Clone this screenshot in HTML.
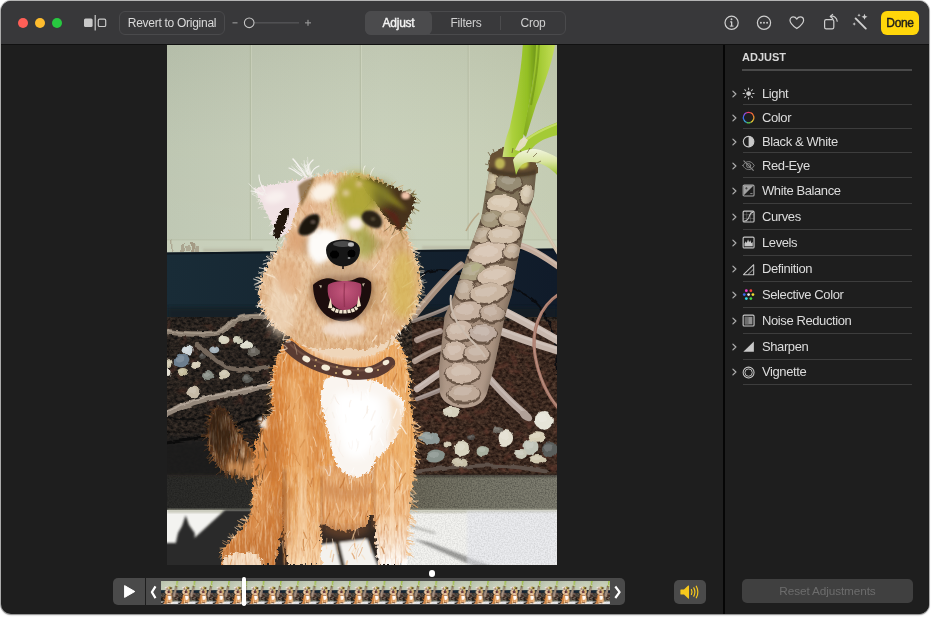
<!DOCTYPE html>
<html lang="en">
<head>
<meta charset="utf-8">
<title>Photos — Adjust</title>
<style>
*{box-sizing:border-box;margin:0;padding:0}
html,body{width:932px;height:618px;background:#fff;overflow:hidden}
body{font-family:"Liberation Sans",Arial,sans-serif;color:#dedede;position:relative}
#win{will-change:transform;position:absolute;left:1px;top:1px;width:928px;height:613px;border-radius:10px;background:#1e1e1e;overflow:hidden;box-shadow:0 0 0 1px rgba(120,120,120,.55),0 1px 2px rgba(0,0,0,.35)}
#tb{position:absolute;left:0;top:0;width:928px;height:44px;background:#38383a;border-bottom:1px solid #111}
.abs{position:absolute}
.dot{position:absolute;top:16.8px;width:10.4px;height:10.4px;border-radius:50%}
.btn{position:absolute;border-radius:6px;font-size:12.5px;line-height:1;white-space:nowrap}
#seg{position:absolute;left:364px;top:10px;width:201px;height:24px;border-radius:6px;border:1px solid #4a4a4c;background:#39393b}
#seg .s{position:absolute;top:0;height:22px;line-height:22px;text-align:center;font-size:12px;letter-spacing:-0.25px;color:#d0d0d0}
#panel{position:absolute;left:724px;top:44px;width:204px;height:570px;background:#1e1e1e}
#vsep{position:absolute;left:722px;top:44px;width:2px;height:570px;background:#060606}
.row{position:absolute;left:0;width:204px;height:20px}
.row .t{position:absolute;left:37px;top:0;font-size:13px;line-height:20px;color:#dcdcdc;white-space:nowrap;letter-spacing:-0.4px}
.row svg.chev{position:absolute;left:6px;top:5px}
.row svg.ic{position:absolute;left:17.2px;top:3.4px;width:13.2px;height:13.2px}
.hl{position:absolute;left:17.8px;width:169px;height:1px;background:#3d3d3d}
</style>
</head>
<body>
<div id="win">
  <div id="tb">
    <div class="dot" style="left:16.9px;background:#ff5f57"></div>
    <div class="dot" style="left:33.9px;background:#febc2e"></div>
    <div class="dot" style="left:50.9px;background:#28c840"></div>
    
    <svg class="abs" style="left:82px;top:13px" width="26" height="18" viewBox="0 0 26 18">
      <rect x="1" y="4.5" width="8.6" height="8.6" rx="1.5" fill="#c9c9c9"/>
      <rect x="11.6" y="1" width="1.2" height="15.5" fill="#c9c9c9"/>
      <rect x="15.3" y="5.1" width="7.4" height="7.4" rx="1.3" fill="none" stroke="#c9c9c9" stroke-width="1.2"/>
    </svg>
    <div class="btn" style="left:118px;top:10px;width:106px;height:24px;border:1px solid #4a4a4c;background:#39393b;color:#dadada;text-align:center;line-height:22px;font-size:12px;letter-spacing:-0.28px">Revert to Original</div>
    <svg class="abs" style="left:228px;top:12px" width="90" height="20" viewBox="0 0 90 20">
      <rect x="3.5" y="9.3" width="5" height="1.1" fill="#9a9a9a"/>
      <rect x="25" y="9.3" width="45" height="1.1" fill="#5c5c5e"/>
      <circle cx="20.2" cy="9.8" r="4.8" fill="#38383a" stroke="#c4c4c4" stroke-width="1.1"/>
      <rect x="76" y="9.3" width="6" height="1.1" fill="#9a9a9a"/><rect x="78.45" y="6.8" width="1.1" height="6" fill="#9a9a9a"/>
    </svg>
    <div id="seg">
      <div class="s" style="left:-1px;top:-1px;width:67px;height:24px;line-height:24px;background:#4b4b4d;border-radius:6px;color:#f4f4f4;font-size:12px;letter-spacing:-0.25px;-webkit-text-stroke:0.4px #f4f4f4">Adjust</div>
      <div class="s" style="left:66px;width:68px">Filters</div>
      <div class="abs" style="left:133.5px;top:4px;width:1px;height:14px;background:#4c4c4e"></div>
      <div class="s" style="left:134px;width:66px">Crop</div>
    </div>
    <svg class="abs" style="left:720px;top:11.2px" width="152" height="22" viewBox="0 0 152 22">
      <g fill="none" stroke="#cfcfcf" stroke-width="1.2" stroke-linecap="round" stroke-linejoin="round">
        <circle cx="10.6" cy="10.8" r="6.6"/>
        <circle cx="43" cy="10.8" r="6.6"/>
        <path d="M75.8 16.6 C 72 13.8 69 11.3 69 8.4 C 69 6.3 70.5 4.9 72.3 4.9 C 73.8 4.9 75 5.8 75.8 7.1 C 76.6 5.8 77.8 4.9 79.3 4.9 C 81.1 4.9 82.6 6.3 82.6 8.4 C 82.6 11.3 79.6 13.8 75.8 16.6 Z"/>
        <rect x="103.6" y="7.6" width="9.2" height="9.2" rx="1.6"/>
        <path d="M109.5 4.4 C 113 3.6 115.9 5.6 116.2 9.2"/>
        <path d="M111.6 2.4 L109.3 4.5 L111.7 6.5"/>
        <path d="M134.6 6.4 L144.8 16.6" stroke-width="1.9"/>
      </g>
      <g fill="#cfcfcf">
        <rect x="10" y="9.6" width="1.3" height="4.6"/><rect x="9" y="9.4" width="2" height="1"/><rect x="8.8" y="13.6" width="3.7" height="1"/><circle cx="10.5" cy="7.2" r="0.95"/>
        <circle cx="39.9" cy="10.8" r="0.95"/><circle cx="43" cy="10.8" r="0.95"/><circle cx="46.1" cy="10.8" r="0.95"/>
        <path d="M143.5 1.8 l0.9 2.1 2.1 0.9 -2.1 0.9 -0.9 2.1 -0.9 -2.1 -2.1 -0.9 2.1 -0.9z"/>
        <path d="M138 1.6 l0.5 1.1 1.1 0.5 -1.1 0.5 -0.5 1.1 -0.5 -1.1 -1.1 -0.5 1.1 -0.5z"/>
        <path d="M133.2 10.2 l0.55 1.2 1.2 0.55 -1.2 0.55 -0.55 1.2 -0.55 -1.2 -1.2 -0.55 1.2 -0.55z"/>
      </g>
    </svg>
    <div class="btn" style="left:880px;top:10px;width:38px;height:24px;background:#ffd60a;color:#1c1c1c;text-align:center;line-height:24px;font-size:12px;letter-spacing:-0.35px;-webkit-text-stroke:0.4px #1c1c1c">Done</div>

  </div>
  
  <svg id="photo" class="abs" style="left:166px;top:44px" width="390" height="520" viewBox="0 0 390 520">
    <defs>
      <filter id="b05" x="-20%" y="-20%" width="140%" height="140%"><feGaussianBlur stdDeviation="0.5"/></filter>
      <filter id="b1" x="-20%" y="-20%" width="140%" height="140%"><feGaussianBlur stdDeviation="1"/></filter>
      <filter id="b2" x="-20%" y="-20%" width="140%" height="140%"><feGaussianBlur stdDeviation="2"/></filter>
      <filter id="b4" x="-30%" y="-30%" width="160%" height="160%"><feGaussianBlur stdDeviation="4"/></filter>
      <filter id="b8" x="-40%" y="-40%" width="180%" height="180%"><feGaussianBlur stdDeviation="8"/></filter>
      <filter id="fur" x="-20%" y="-20%" width="140%" height="140%" color-interpolation-filters="sRGB">
        <feTurbulence type="fractalNoise" baseFrequency="0.3" numOctaves="2" seed="4" result="n"/>
        <feDisplacementMap in="SourceGraphic" in2="n" scale="8" xChannelSelector="R" yChannelSelector="G" result="disp"/>
        <feTurbulence type="fractalNoise" baseFrequency="0.5 0.07" numOctaves="3" seed="12" result="n2"/>
        <feColorMatrix in="n2" type="matrix" values="0 0 0 0 1  0 0 0 0 0.93  0 0 0 0 0.82  1.15 0 0 0 -0.5" result="lt"/>
        <feComposite in="lt" in2="disp" operator="in" result="ltin"/>
        <feColorMatrix in="n2" type="matrix" values="0 0 0 0 0.76  0 0 0 0 0.38  0 0 0 0 0.1  0 0.95 0 0 -0.42" result="dk"/>
        <feComposite in="dk" in2="disp" operator="in" result="dkin"/>
        <feMerge><feMergeNode in="disp"/><feMergeNode in="dkin"/><feMergeNode in="ltin"/></feMerge>
        <feGaussianBlur stdDeviation="0.55"/>
      </filter>
      <filter id="furh" x="-20%" y="-20%" width="140%" height="140%" color-interpolation-filters="sRGB">
        <feTurbulence type="fractalNoise" baseFrequency="0.3" numOctaves="2" seed="4" result="n"/>
        <feDisplacementMap in="SourceGraphic" in2="n" scale="8" xChannelSelector="R" yChannelSelector="G" result="disp"/>
        <feTurbulence type="fractalNoise" baseFrequency="0.3 0.12" numOctaves="3" seed="21" result="n2"/>
        <feColorMatrix in="n2" type="matrix" values="0 0 0 0 1  0 0 0 0 0.93  0 0 0 0 0.82  0.9 0 0 0 -0.4" result="lt"/>
        <feComposite in="lt" in2="disp" operator="in" result="ltin"/>
        <feColorMatrix in="n2" type="matrix" values="0 0 0 0 0.66  0 0 0 0 0.34  0 0 0 0 0.1  0 0.7 0 0 -0.32" result="dk"/>
        <feComposite in="dk" in2="disp" operator="in" result="dkin"/>
        <feMerge><feMergeNode in="disp"/><feMergeNode in="dkin"/><feMergeNode in="ltin"/></feMerge>
        <feGaussianBlur stdDeviation="0.55"/>
      </filter>
      <filter id="fur2" x="-20%" y="-20%" width="140%" height="140%">
        <feTurbulence type="fractalNoise" baseFrequency="0.35" numOctaves="2" seed="9" result="n"/>
        <feDisplacementMap in="SourceGraphic" in2="n" scale="6" xChannelSelector="R" yChannelSelector="G"/>
        <feGaussianBlur stdDeviation="0.5"/>
      </filter>
      <filter id="mulch" x="0" y="0" width="100%" height="100%" color-interpolation-filters="sRGB">
        <feTurbulence type="fractalNoise" baseFrequency="0.28 0.36" numOctaves="3" seed="7"/>
        <feColorMatrix type="matrix" values="0.5 0 0 0 -0.07  0.4 0 0 0 -0.05  0.32 0 0 0 -0.035  0 0 0 0 1"/>
      </filter>
      <filter id="rough" x="-5%" y="-5%" width="110%" height="110%" color-interpolation-filters="sRGB">
        <feTurbulence type="fractalNoise" baseFrequency="0.12" numOctaves="2" seed="5" result="n"/>
        <feDisplacementMap in="SourceGraphic" in2="n" scale="4.5" xChannelSelector="R" yChannelSelector="G"/>
        <feGaussianBlur stdDeviation="0.55"/>
      </filter>
      <filter id="grain" x="0" y="0" width="100%" height="100%" color-interpolation-filters="sRGB">
        <feTurbulence type="fractalNoise" baseFrequency="0.7" numOctaves="2" seed="3"/>
        <feColorMatrix type="matrix" values="0 0 0 0 0  0 0 0 0 0  0 0 0 0 0  1.6 0 0 0 -0.55"/>
      </filter>
      <linearGradient id="wall" x1="0" x2="1" y1="0" y2="0">
        <stop offset="0" stop-color="#bcc5b0"/><stop offset="0.22" stop-color="#c2cab5"/><stop offset="0.55" stop-color="#c8d0ba"/><stop offset="0.8" stop-color="#c6ceb6"/><stop offset="1" stop-color="#c2cab0"/>
      </linearGradient>
      <linearGradient id="wallv" x1="0" x2="0" y1="0" y2="1">
        <stop offset="0" stop-color="#000" stop-opacity="0.04"/><stop offset="0.5" stop-color="#fff" stop-opacity="0.03"/><stop offset="1" stop-color="#fff" stop-opacity="0.06"/>
      </linearGradient>
      <linearGradient id="curb" x1="0" x2="1" y1="0" y2="0">
        <stop offset="0" stop-color="#2c2c2a"/><stop offset="0.24" stop-color="#30302d"/><stop offset="0.3" stop-color="#5a584c"/><stop offset="0.62" stop-color="#6e6b5c"/><stop offset="0.8" stop-color="#79786a"/><stop offset="1" stop-color="#807f72"/>
      </linearGradient>
      <clipPath id="pc"><rect x="0" y="0" width="390" height="520"/></clipPath>
    </defs>
    <g id="photoG" clip-path="url(#pc)">
      <!-- wall -->
      <rect x="0" y="0" width="390" height="209" fill="url(#wall)"/>
      <rect x="0" y="0" width="390" height="209" fill="url(#wallv)"/>
      <g filter="url(#b05)">
        <rect x="82.8" y="0" width="1.1" height="196" fill="#a9b096" opacity=".55"/><rect x="84" y="0" width="1" height="196" fill="#d8dcc6" opacity=".4"/>
        <rect x="192.8" y="0" width="1.1" height="130" fill="#adb49a" opacity=".6"/><rect x="194" y="0" width="1" height="130" fill="#dadec8" opacity=".45"/>
        <rect x="300.6" y="0" width="1.1" height="196" fill="#adb49a" opacity=".6"/><rect x="301.8" y="0" width="1" height="196" fill="#d8dcc6" opacity=".4"/>
      </g>
      <!-- wall base trim -->
      <rect x="0" y="195" width="390" height="13.5" fill="#cad1bc" opacity=".7"/>
      <rect x="0" y="194.4" width="390" height="1" fill="#b0b69c" opacity=".55"/>
      <g filter="url(#rough)" fill="#86705a">
        <rect x="4" y="194" width="1.4" height="12" opacity=".4"/><rect x="14" y="199" width="3" height="8" opacity=".45"/><rect x="18" y="201" width="5" height="6" opacity=".4"/><rect x="24" y="197" width="3.4" height="10" opacity=".55"/><rect x="28" y="200" width="4" height="7" opacity=".45"/>
        <rect x="110" y="198" width="1.2" height="9" opacity=".3"/>
      </g>
      <g fill="#86705a" filter="url(#b1)"><rect x="36" y="203.5" width="60" height="3.5" opacity=".2"/><rect x="255" y="201" width="60" height="3.5" opacity=".2"/></g>
      <!-- dark band -->
      <defs><linearGradient id="bandg" x1="0" x2="1" y1="0" y2="0"><stop offset="0" stop-color="#192c37"/><stop offset="0.5" stop-color="#152430"/><stop offset="1" stop-color="#101b2a"/></linearGradient></defs>
      <path d="M0 207.6 L390 203.6 L390 275 L0 275 Z" fill="url(#bandg)"/>
      <path d="M0 207.6 L390 203.6 L390 205.6 L0 209.6 Z" fill="#0c141c" opacity=".8"/>
      <rect x="0" y="262" width="390" height="14" fill="#121c22" opacity=".7" filter="url(#b2)"/>
      <!-- mulch ground -->
      <rect x="0" y="272" width="390" height="160" fill="#2a2522"/>
      <rect x="0" y="272" width="390" height="160" filter="url(#mulch)" opacity=".95"/>
      <rect x="0" y="272" width="110" height="160" fill="#1c1a19" opacity=".35"/>
      <rect x="245" y="276" width="150" height="156" fill="#6a3420" opacity=".22"/>
      <rect x="-10" y="392" width="116" height="44" fill="#1e1e1d" opacity=".92" filter="url(#b4)"/>
      <g filter="url(#rough)"><g fill="#6a3d31" opacity=".55" filter="url(#b1)"><ellipse cx="339" cy="391" rx="7.0" ry="2.5" transform="rotate(34 339 391)"/><ellipse cx="380" cy="289" rx="5.3" ry="2.5" transform="rotate(21 380 289)"/><ellipse cx="377" cy="301" rx="5.3" ry="1.4" transform="rotate(6 377 301)"/><ellipse cx="332" cy="287" rx="4.1" ry="1.4" transform="rotate(58 332 287)"/><ellipse cx="358" cy="308" rx="7.0" ry="1.2" transform="rotate(16 358 308)"/><ellipse cx="272" cy="285" rx="7.4" ry="1.3" transform="rotate(-40 272 285)"/><ellipse cx="388" cy="410" rx="4.4" ry="2.5" transform="rotate(5 388 410)"/><ellipse cx="347" cy="314" rx="7.7" ry="2.1" transform="rotate(65 347 314)"/><ellipse cx="376" cy="328" rx="4.8" ry="1.3" transform="rotate(-50 376 328)"/><ellipse cx="264" cy="328" rx="6.0" ry="1.0" transform="rotate(25 264 328)"/><ellipse cx="301" cy="329" rx="7.1" ry="1.8" transform="rotate(-26 301 329)"/><ellipse cx="320" cy="386" rx="3.3" ry="2.6" transform="rotate(-67 320 386)"/><ellipse cx="356" cy="406" rx="3.1" ry="2.3" transform="rotate(-19 356 406)"/><ellipse cx="333" cy="286" rx="3.2" ry="1.3" transform="rotate(64 333 286)"/><ellipse cx="282" cy="393" rx="7.6" ry="2.5" transform="rotate(-22 282 393)"/><ellipse cx="303" cy="360" rx="6.9" ry="1.2" transform="rotate(35 303 360)"/><ellipse cx="363" cy="408" rx="3.2" ry="2.5" transform="rotate(-57 363 408)"/><ellipse cx="301" cy="372" rx="7.6" ry="1.5" transform="rotate(59 301 372)"/><ellipse cx="329" cy="330" rx="4.6" ry="1.3" transform="rotate(-59 329 330)"/><ellipse cx="275" cy="384" rx="8.0" ry="1.3" transform="rotate(-63 275 384)"/><ellipse cx="388" cy="361" rx="5.0" ry="1.4" transform="rotate(13 388 361)"/><ellipse cx="367" cy="350" rx="5.1" ry="1.1" transform="rotate(58 367 350)"/><ellipse cx="259" cy="356" rx="7.2" ry="1.2" transform="rotate(32 259 356)"/><ellipse cx="383" cy="375" rx="6.9" ry="1.2" transform="rotate(-9 383 375)"/><ellipse cx="275" cy="406" rx="4.5" ry="1.7" transform="rotate(70 275 406)"/><ellipse cx="370" cy="425" rx="5.3" ry="1.8" transform="rotate(32 370 425)"/><ellipse cx="320" cy="327" rx="5.0" ry="1.2" transform="rotate(-17 320 327)"/><ellipse cx="388" cy="422" rx="6.1" ry="1.8" transform="rotate(-23 388 422)"/><ellipse cx="267" cy="324" rx="6.9" ry="2.4" transform="rotate(-19 267 324)"/><ellipse cx="361" cy="396" rx="6.5" ry="2.1" transform="rotate(36 361 396)"/><ellipse cx="304" cy="386" rx="4.4" ry="1.8" transform="rotate(38 304 386)"/><ellipse cx="348" cy="327" rx="7.7" ry="2.0" transform="rotate(11 348 327)"/><ellipse cx="257" cy="363" rx="4.3" ry="2.1" transform="rotate(-5 257 363)"/><ellipse cx="365" cy="378" rx="7.0" ry="1.6" transform="rotate(20 365 378)"/><ellipse cx="355" cy="403" rx="4.8" ry="2.3" transform="rotate(52 355 403)"/><ellipse cx="348" cy="425" rx="7.8" ry="1.8" transform="rotate(4 348 425)"/><ellipse cx="277" cy="405" rx="7.7" ry="1.8" transform="rotate(27 277 405)"/><ellipse cx="352" cy="389" rx="3.9" ry="2.2" transform="rotate(11 352 389)"/><ellipse cx="345" cy="345" rx="6.1" ry="2.2" transform="rotate(19 345 345)"/><ellipse cx="352" cy="289" rx="3.8" ry="1.7" transform="rotate(21 352 289)"/><ellipse cx="285" cy="383" rx="6.2" ry="1.1" transform="rotate(-4 285 383)"/><ellipse cx="286" cy="293" rx="3.7" ry="1.5" transform="rotate(-45 286 293)"/><ellipse cx="281" cy="290" rx="5.3" ry="1.6" transform="rotate(16 281 290)"/><ellipse cx="335" cy="319" rx="7.5" ry="1.0" transform="rotate(-13 335 319)"/><ellipse cx="293" cy="344" rx="3.6" ry="2.3" transform="rotate(-18 293 344)"/><ellipse cx="260" cy="373" rx="3.5" ry="1.9" transform="rotate(-22 260 373)"/><ellipse cx="333" cy="422" rx="7.1" ry="1.7" transform="rotate(44 333 422)"/><ellipse cx="342" cy="338" rx="3.7" ry="2.0" transform="rotate(9 342 338)"/><ellipse cx="384" cy="423" rx="6.0" ry="1.6" transform="rotate(55 384 423)"/><ellipse cx="255" cy="300" rx="5.8" ry="2.0" transform="rotate(-50 255 300)"/><ellipse cx="340" cy="412" rx="4.9" ry="1.7" transform="rotate(-38 340 412)"/><ellipse cx="294" cy="424" rx="4.9" ry="2.5" transform="rotate(58 294 424)"/><ellipse cx="335" cy="322" rx="7.9" ry="1.8" transform="rotate(-12 335 322)"/><ellipse cx="298" cy="426" rx="5.5" ry="1.5" transform="rotate(-3 298 426)"/><ellipse cx="271" cy="374" rx="5.2" ry="1.5" transform="rotate(39 271 374)"/><ellipse cx="367" cy="287" rx="5.7" ry="1.4" transform="rotate(61 367 287)"/><ellipse cx="361" cy="320" rx="4.3" ry="1.2" transform="rotate(68 361 320)"/><ellipse cx="295" cy="372" rx="5.4" ry="2.0" transform="rotate(15 295 372)"/><ellipse cx="355" cy="302" rx="6.8" ry="1.5" transform="rotate(5 355 302)"/><ellipse cx="300" cy="327" rx="5.6" ry="1.7" transform="rotate(-19 300 327)"/><ellipse cx="356" cy="369" rx="3.2" ry="1.4" transform="rotate(-6 356 369)"/><ellipse cx="379" cy="412" rx="5.7" ry="1.0" transform="rotate(39 379 412)"/><ellipse cx="313" cy="367" rx="6.5" ry="2.0" transform="rotate(-3 313 367)"/><ellipse cx="378" cy="340" rx="5.0" ry="2.4" transform="rotate(-42 378 340)"/><ellipse cx="295" cy="404" rx="3.3" ry="2.3" transform="rotate(27 295 404)"/><ellipse cx="313" cy="326" rx="6.9" ry="2.5" transform="rotate(-50 313 326)"/><ellipse cx="320" cy="364" rx="5.5" ry="1.5" transform="rotate(-49 320 364)"/><ellipse cx="334" cy="401" rx="3.3" ry="1.4" transform="rotate(45 334 401)"/><ellipse cx="362" cy="380" rx="3.1" ry="2.2" transform="rotate(67 362 380)"/><ellipse cx="390" cy="385" rx="3.2" ry="2.3" transform="rotate(-39 390 385)"/><ellipse cx="71" cy="356" rx="5.8" ry="1.2" opacity=".7" transform="rotate(-29 71 356)"/><ellipse cx="101" cy="289" rx="5.4" ry="1.5" opacity=".7" transform="rotate(-47 101 289)"/><ellipse cx="68" cy="280" rx="3.4" ry="1.5" opacity=".7" transform="rotate(-60 68 280)"/><ellipse cx="6" cy="324" rx="6.0" ry="2.1" opacity=".7" transform="rotate(-51 6 324)"/><ellipse cx="47" cy="302" rx="5.4" ry="1.6" opacity=".7" transform="rotate(61 47 302)"/><ellipse cx="41" cy="281" rx="5.8" ry="1.2" opacity=".7" transform="rotate(18 41 281)"/><ellipse cx="56" cy="352" rx="5.2" ry="1.7" opacity=".7" transform="rotate(-33 56 352)"/><ellipse cx="61" cy="297" rx="6.0" ry="1.6" opacity=".7" transform="rotate(-51 61 297)"/><ellipse cx="26" cy="307" rx="5.9" ry="1.2" opacity=".7" transform="rotate(30 26 307)"/><ellipse cx="72" cy="283" rx="5.7" ry="1.1" opacity=".7" transform="rotate(-53 72 283)"/><ellipse cx="65" cy="296" rx="6.5" ry="1.6" opacity=".7" transform="rotate(-25 65 296)"/><ellipse cx="88" cy="278" rx="5.9" ry="1.1" opacity=".7" transform="rotate(-49 88 278)"/><ellipse cx="105" cy="333" rx="3.9" ry="1.1" opacity=".7" transform="rotate(66 105 333)"/><ellipse cx="73" cy="345" rx="3.6" ry="1.7" opacity=".7" transform="rotate(-20 73 345)"/><ellipse cx="26" cy="304" rx="5.5" ry="1.4" opacity=".7" transform="rotate(-16 26 304)"/><ellipse cx="15" cy="346" rx="5.6" ry="2.0" opacity=".7" transform="rotate(-9 15 346)"/><ellipse cx="94" cy="319" rx="5.4" ry="1.7" opacity=".7" transform="rotate(34 94 319)"/><ellipse cx="44" cy="284" rx="3.1" ry="1.2" opacity=".7" transform="rotate(-64 44 284)"/><ellipse cx="98" cy="316" rx="6.0" ry="1.0" opacity=".7" transform="rotate(-4 98 316)"/><ellipse cx="98" cy="328" rx="4.7" ry="1.6" opacity=".7" transform="rotate(-56 98 328)"/><ellipse cx="17" cy="289" rx="4.5" ry="1.5" opacity=".7" transform="rotate(53 17 289)"/><ellipse cx="17" cy="297" rx="4.1" ry="1.2" opacity=".7" transform="rotate(-30 17 297)"/><ellipse cx="26" cy="316" rx="3.1" ry="2.1" opacity=".7" transform="rotate(-18 26 316)"/><ellipse cx="103" cy="334" rx="5.7" ry="1.6" opacity=".7" transform="rotate(62 103 334)"/><ellipse cx="13" cy="332" rx="4.2" ry="1.8" opacity=".7" transform="rotate(32 13 332)"/><ellipse cx="18" cy="293" rx="3.1" ry="1.3" opacity=".7" transform="rotate(-59 18 293)"/><ellipse cx="44" cy="358" rx="4.5" ry="1.4" opacity=".7" transform="rotate(-4 44 358)"/><ellipse cx="31" cy="338" rx="5.9" ry="1.2" opacity=".7" transform="rotate(-36 31 338)"/><ellipse cx="74" cy="355" rx="5.6" ry="1.5" opacity=".7" transform="rotate(67 74 355)"/><ellipse cx="1" cy="281" rx="6.1" ry="1.5" opacity=".7" transform="rotate(-64 1 281)"/></g><path d="M0 398 C 20 396 40 392 60 384 S 90 372 104 366" stroke="#0b0b0b" stroke-width="3" fill="none"/><path d="M0 372 C 20 378 45 372 62 364" stroke="#0d0d0d" stroke-width="2.2" fill="none" opacity=".8"/><path d="M246 236 C 262 222 280 222 300 232 S 352 236 372 262 S 388 300 390 330" stroke="#0a0c10" stroke-width="1.8" fill="none"/><path d="M0 286.5 C 18 289 36 290 48.5 288 S 64 276 72 273.5 S 88 271 100 271" stroke="#8b7e70" stroke-width="5.5" fill="none" stroke-linecap="round"/><path d="M0 285.5 C 18 288 36 289 48.5 287 S 64 275 72 272.5 S 88 270 100 270" stroke="#b0a494" stroke-width="1.6" fill="none" opacity=".7"/><path d="M30 300 C 40 306 46 314 56 320 S 80 326 100 322" stroke="#74675b" stroke-width="4.5" fill="none" stroke-linecap="round"/><path d="M0 368 C 14 361 26 357 38 354 S 60 350 74 346.5 S 92 342 102 341" stroke="#94877a" stroke-width="6" fill="none" stroke-linecap="round"/><path d="M0 366.5 C 14 359.5 26 355.5 38 352.5 S 60 348.5 74 345 S 92 340.5 102 339.5" stroke="#c0b4a6" stroke-width="1.8" fill="none" opacity=".7"/><path d="M251 426.5 C 272 423 292 421 314 420.5 S 356 422 379 426.5" stroke="#5e5149" stroke-width="4" fill="none" stroke-linecap="round"/><ellipse cx="57" cy="295" rx="5.5" ry="4" fill="#d6d2be"/><ellipse cx="56.2" cy="294.0" rx="3.0" ry="1.8" fill="#fff" opacity=".14"/><ellipse cx="70.5" cy="295" rx="4.5" ry="4" fill="#c9c8b4"/><ellipse cx="69.8" cy="294.0" rx="2.5" ry="1.8" fill="#fff" opacity=".14"/><ellipse cx="80" cy="300" rx="7" ry="4.5" fill="#dcdccc" transform="rotate(-10 80 300)"/><ellipse cx="79.0" cy="298.9" rx="3.9" ry="2.0" fill="#fff" opacity=".14" transform="rotate(-10 80 300)"/><ellipse cx="20.6" cy="304.8" rx="6" ry="5" fill="#cfd7da"/><ellipse cx="19.7" cy="303.6" rx="3.3" ry="2.2" fill="#fff" opacity=".14"/><ellipse cx="47.3" cy="304.8" rx="5" ry="3.5" fill="#a4b0b8"/><ellipse cx="46.5" cy="303.9" rx="2.8" ry="1.6" fill="#fff" opacity=".14"/><ellipse cx="14.6" cy="315.7" rx="8" ry="6.5" fill="#6c7e8e" transform="rotate(-15 14.6 315.7)"/><ellipse cx="13.4" cy="314.1" rx="4.4" ry="2.9" fill="#fff" opacity=".14" transform="rotate(-15 14.6 315.7)"/><ellipse cx="29" cy="320" rx="5.5" ry="4" fill="#d6cdb6"/><ellipse cx="28.2" cy="319.0" rx="3.0" ry="1.8" fill="#fff" opacity=".14"/><ellipse cx="2.4" cy="318" rx="3" ry="4" fill="#d2cab2"/><ellipse cx="1.9" cy="317.0" rx="1.7" ry="1.8" fill="#fff" opacity=".14"/><ellipse cx="1" cy="327" rx="2.5" ry="4" fill="#e4e0d4"/><ellipse cx="0.6" cy="326.0" rx="1.4" ry="1.8" fill="#fff" opacity=".14"/><ellipse cx="15.8" cy="327" rx="5.5" ry="4" fill="#c6be9e"/><ellipse cx="15.0" cy="326.0" rx="3.0" ry="1.8" fill="#fff" opacity=".14"/><ellipse cx="41" cy="330" rx="6" ry="5" fill="#868c84"/><ellipse cx="40.1" cy="328.8" rx="3.3" ry="2.2" fill="#fff" opacity=".14"/><ellipse cx="57" cy="329" rx="5" ry="4.5" fill="#cec6ae"/><ellipse cx="56.2" cy="327.9" rx="2.8" ry="2.0" fill="#fff" opacity=".14"/><ellipse cx="26.7" cy="347" rx="6.5" ry="5.5" fill="#c6baa6"/><ellipse cx="25.7" cy="345.6" rx="3.6" ry="2.5" fill="#fff" opacity=".14"/><ellipse cx="87" cy="307" rx="6" ry="5" fill="#68645c"/><ellipse cx="86.1" cy="305.8" rx="3.3" ry="2.2" fill="#fff" opacity=".14"/><ellipse cx="80" cy="334" rx="5" ry="4" fill="#585853"/><ellipse cx="79.2" cy="333.0" rx="2.8" ry="1.8" fill="#fff" opacity=".14"/><ellipse cx="36" cy="312" rx="4" ry="3" fill="#4c4a46"/><ellipse cx="35.4" cy="311.2" rx="2.2" ry="1.4" fill="#fff" opacity=".14"/><ellipse cx="261.5" cy="393" rx="10.5" ry="6" fill="#8f9a98" transform="rotate(8 261.5 393)"/><ellipse cx="259.9" cy="391.5" rx="5.8" ry="2.7" fill="#fff" opacity=".14" transform="rotate(8 261.5 393)"/><ellipse cx="294.8" cy="404" rx="8.2" ry="8" fill="#d8d4c0"/><ellipse cx="293.6" cy="402.0" rx="4.5" ry="3.6" fill="#fff" opacity=".14"/><ellipse cx="268.5" cy="411" rx="9.5" ry="6.5" fill="#88928c" transform="rotate(-8 268.5 411)"/><ellipse cx="267.1" cy="409.4" rx="5.2" ry="2.9" fill="#fff" opacity=".14" transform="rotate(-8 268.5 411)"/><ellipse cx="338.3" cy="393" rx="7.8" ry="8" fill="#e2decf"/><ellipse cx="337.1" cy="391.0" rx="4.3" ry="3.6" fill="#fff" opacity=".14"/><ellipse cx="315.8" cy="406" rx="6.2" ry="5" fill="#a8b0a0"/><ellipse cx="314.9" cy="404.8" rx="3.4" ry="2.2" fill="#fff" opacity=".14"/><ellipse cx="363.5" cy="402" rx="8" ry="8" fill="#c0c4b8"/><ellipse cx="362.3" cy="400.0" rx="4.4" ry="3.6" fill="#fff" opacity=".14"/><ellipse cx="369.7" cy="392" rx="9" ry="4.8" fill="#d8d0b8"/><ellipse cx="368.3" cy="390.8" rx="5.0" ry="2.2" fill="#fff" opacity=".14"/><ellipse cx="383" cy="404.5" rx="8" ry="7.5" fill="#5a5e5c"/><ellipse cx="381.8" cy="402.6" rx="4.4" ry="3.4" fill="#fff" opacity=".14"/><ellipse cx="353.5" cy="409" rx="6.5" ry="5" fill="#c8c8b8"/><ellipse cx="352.5" cy="407.8" rx="3.6" ry="2.2" fill="#fff" opacity=".14"/><ellipse cx="292.7" cy="417.6" rx="8.2" ry="4.2" fill="#c8c0a8"/><ellipse cx="291.5" cy="416.6" rx="4.5" ry="1.9" fill="#fff" opacity=".14"/><ellipse cx="370.8" cy="414.2" rx="7.8" ry="4.2" fill="#d0c8b0"/><ellipse cx="369.6" cy="413.1" rx="4.3" ry="1.9" fill="#fff" opacity=".14"/><ellipse cx="281" cy="399.6" rx="3.5" ry="3" fill="#cfc7b1"/><ellipse cx="280.5" cy="398.9" rx="1.9" ry="1.4" fill="#fff" opacity=".14"/><ellipse cx="285.4" cy="366.5" rx="7" ry="4.8" fill="#d6d0bc"/><ellipse cx="284.3" cy="365.3" rx="3.9" ry="2.2" fill="#fff" opacity=".14"/><ellipse cx="376.9" cy="375.4" rx="9" ry="9.5" fill="#e6e4d8"/><ellipse cx="375.5" cy="373.0" rx="5.0" ry="4.3" fill="#fff" opacity=".14"/><ellipse cx="283" cy="367" rx="7" ry="5" fill="#d6d0bc"/><ellipse cx="281.9" cy="365.8" rx="3.9" ry="2.2" fill="#fff" opacity=".14"/><ellipse cx="331" cy="385" rx="4" ry="3" fill="#6e6a62"/><ellipse cx="330.4" cy="384.2" rx="2.2" ry="1.4" fill="#fff" opacity=".14"/><ellipse cx="304" cy="392" rx="4" ry="3" fill="#4e4a46"/><ellipse cx="303.4" cy="391.2" rx="2.2" ry="1.4" fill="#fff" opacity=".14"/></g>
      <!-- curb -->
      <rect x="0" y="430" width="390" height="37" fill="url(#curb)"/>
      <rect x="0" y="430" width="390" height="37" filter="url(#grain)" opacity=".35"/>
      <rect x="0" y="429" width="390" height="3" fill="#2a2824" opacity=".6" filter="url(#b1)"/>
      <!-- pavement -->
      <rect x="0" y="465" width="390" height="55" fill="#f3f3f0"/>
      <rect x="0" y="464" width="390" height="4" fill="#b9baa8" opacity=".7" filter="url(#b1)"/>
      <g filter="url(#b1)">
        <path d="M58 465 L104 465 L104 530 L-10 530 L-10 498 L22 498 Z" fill="#2b2b29"/>
        <path d="M8.8 498 L11 488 L15 481 L18.7 470.5 L22 480 L27.7 488 L27.7 498 Z" fill="#2b2b29"/>
        <path d="M92 464 L226 464 L234 530 L80 530 Z" fill="#2e2622"/>
        <path d="M152 500 L200 494 L214 530 L150 530 Z" fill="#f4f2ee"/>
        <path d="M170 497 L178 530" stroke="#3a3028" stroke-width="4.5"/>
        <path d="M245.6 494 L262 497 L348 530 L326 530 Z" fill="#8e8e8c" opacity=".85"/>
        <path d="M243 481 L268 488" stroke="#a0a09c" stroke-width="2.5" opacity=".6"/>
        <rect x="300" y="466" width="90" height="54" fill="#e6e8ee" opacity=".6"/>
      </g>
      <rect x="240" y="466" width="150" height="54" filter="url(#grain)" opacity=".12"/>
      <!--TRUNK-START--><defs><clipPath id="tc"><path d="M324.7 112 L368.7 112 L369 128 L367 150 L359.6 172.6 L351.6 211 L344.5 250 L338 271 L327 322.6 L320 348 Q 316 362 296 363 Q 276 361 273 348 L272 322.6 L277.6 271 L287 250 L300 211 L314.4 172.6 L318 150 L322 128 Z"/></clipPath><linearGradient id="tg" x1="0" x2="0" y1="0" y2="1"><stop offset="0" stop-color="#6a5e46"/><stop offset="0.15" stop-color="#7e7058"/><stop offset="0.45" stop-color="#917c68"/><stop offset="0.7" stop-color="#a8917f"/><stop offset="1" stop-color="#b29c8c"/></linearGradient>
<linearGradient id="st1" x1="0" x2="1" y1="0" y2="0"><stop offset="0" stop-color="#cbdf7c"/><stop offset="0.3" stop-color="#acd03c"/><stop offset="0.75" stop-color="#93bf24"/><stop offset="1" stop-color="#6f9618"/></linearGradient>
<linearGradient id="st2" x1="0" x2="1" y1="0" y2="0"><stop offset="0" stop-color="#7fa61e"/><stop offset="0.5" stop-color="#a0c830"/><stop offset="1" stop-color="#c4de58"/></linearGradient>
<linearGradient id="st4" x1="0" x2="0" y1="0" y2="1"><stop offset="0" stop-color="#f0f4dc"/><stop offset="0.45" stop-color="#dbe6a4"/><stop offset="1" stop-color="#98be28"/></linearGradient>
</defs><g fill="none" stroke-linecap="round" filter="url(#b05)"><path d="M294 220 C 280 230 262 252 246 272" stroke="#a8907e" stroke-width="7"/><path d="M294 220 C 280 230 262 252 246 272" stroke="#fff" stroke-width="2.1" opacity=".18" transform="translate(0,-1.5)"/><path d="M282 262 C 270 268 258 272 246 276" stroke="#8a7c74" stroke-width="4"/><path d="M282 262 C 270 268 258 272 246 276" stroke="#fff" stroke-width="1.2" opacity=".18" transform="translate(0,-0.9)"/><path d="M273 286 C 266 288 258 291 250 295" stroke="#a8948a" stroke-width="6"/><path d="M273 286 C 266 288 258 291 250 295" stroke="#fff" stroke-width="1.8" opacity=".18" transform="translate(0,-1.3)"/><path d="M274 303 C 266 306 258 310 248 316" stroke="#ae9a8e" stroke-width="6"/><path d="M274 303 C 266 306 258 310 248 316" stroke="#fff" stroke-width="1.8" opacity=".18" transform="translate(0,-1.3)"/><path d="M282 322 C 272 328 262 336 250 344" stroke="#c0b0a8" stroke-width="6.5"/><path d="M282 322 C 272 328 262 336 250 344" stroke="#fff" stroke-width="1.9" opacity=".18" transform="translate(0,-1.4)"/><path d="M274 344.6 C 266 348 258 351 250 354" stroke="#9a8a84" stroke-width="4.5"/><path d="M274 344.6 C 266 348 258 351 250 354" stroke="#fff" stroke-width="1.3" opacity=".18" transform="translate(0,-1.0)"/><path d="M352 200 C 366 204 378 212 392 222" stroke="#c4ac9c" stroke-width="6"/><path d="M352 200 C 366 204 378 212 392 222" stroke="#fff" stroke-width="1.8" opacity=".18" transform="translate(0,-1.3)"/><path d="M330 263 C 346 270 360 278 392 296" stroke="#c8b8ae" stroke-width="8"/><path d="M330 263 C 346 270 360 278 392 296" stroke="#fff" stroke-width="2.4" opacity=".18" transform="translate(0,-1.8)"/><path d="M328 284 C 346 291 366 298 392 306" stroke="#c4b4aa" stroke-width="8"/><path d="M328 284 C 346 291 366 298 392 306" stroke="#fff" stroke-width="2.4" opacity=".18" transform="translate(0,-1.8)"/><path d="M315 325 C 326 338 342 356 358 369" stroke="#b8a8a0" stroke-width="7"/><path d="M315 325 C 326 338 342 356 358 369" stroke="#fff" stroke-width="2.1" opacity=".18" transform="translate(0,-1.5)"/><path d="M363.5 163.5 C 370 172 380 190 391 208" stroke="#d0c0a8" stroke-width="3.4"/><path d="M363.5 163.5 C 370 172 380 190 391 208" stroke="#fff" stroke-width="1.0" opacity=".18" transform="translate(0,-0.7)"/><path d="M392 249 C 372 262 364 286 368 310 S 380 350 392 364" stroke="#a87868" stroke-width="3.2"/><path d="M392 249 C 372 262 364 286 368 310 S 380 350 392 364" stroke="#fff" stroke-width="1.0" opacity=".18" transform="translate(0,-0.7)"/><ellipse cx="359" cy="371" rx="7" ry="4" fill="#b0a098" transform="rotate(35 359 371)"/></g><path d="M324.7 112 L368.7 112 L369 128 L367 150 L359.6 172.6 L351.6 211 L344.5 250 L338 271 L327 322.6 L320 348 Q 316 362 296 363 Q 276 361 273 348 L272 322.6 L277.6 271 L287 250 L300 211 L314.4 172.6 L318 150 L322 128 Z" fill="url(#tg)" filter="url(#b05)"/><g clip-path="url(#tc)"><g filter="url(#rough)"><ellipse cx="324.5" cy="137.2" rx="8.6" ry="11.3" fill="#4e3c2e" opacity=".7" transform="rotate(8 324.5 136)"/><ellipse cx="324.5" cy="136" rx="7.3" ry="9.9" fill="#cabb99" transform="rotate(8 324.5 136)"/><ellipse cx="323.8" cy="134.0" rx="4.4" ry="5.0" fill="#fff" opacity=".16" transform="rotate(8 324.5 136)"/><ellipse cx="342" cy="138.2" rx="13.7" ry="10.2" fill="#4e3c2e" opacity=".7" transform="rotate(0 342 137)"/><ellipse cx="342" cy="137" rx="12.4" ry="8.8" fill="#968c74" transform="rotate(0 342 137)"/><ellipse cx="340.8" cy="135.2" rx="7.5" ry="4.4" fill="#fff" opacity=".16" transform="rotate(0 342 137)"/><ellipse cx="360" cy="150.2" rx="8.1" ry="11.3" fill="#4e3c2e" opacity=".7" transform="rotate(10 360 149)"/><ellipse cx="360" cy="149" rx="6.8" ry="9.9" fill="#d4c6ad" transform="rotate(10 360 149)"/><ellipse cx="359.3" cy="147.0" rx="4.1" ry="5.0" fill="#fff" opacity=".16" transform="rotate(10 360 149)"/><ellipse cx="335" cy="160.2" rx="17.1" ry="10.6" fill="#4e3c2e" opacity=".7" transform="rotate(5 335 159)"/><ellipse cx="335" cy="159" rx="15.8" ry="9.2" fill="#d7c6af" transform="rotate(5 335 159)"/><ellipse cx="333.4" cy="157.2" rx="9.5" ry="4.6" fill="#fff" opacity=".16" transform="rotate(5 335 159)"/><ellipse cx="324.5" cy="175.2" rx="13.2" ry="9.8" fill="#4e3c2e" opacity=".7" transform="rotate(-10 324.5 174)"/><ellipse cx="324.5" cy="174" rx="11.9" ry="8.4" fill="#a4977b" transform="rotate(-10 324.5 174)"/><ellipse cx="323.3" cy="172.3" rx="7.1" ry="4.2" fill="#fff" opacity=".16" transform="rotate(-10 324.5 174)"/><ellipse cx="346" cy="175.2" rx="15.4" ry="9.8" fill="#4e3c2e" opacity=".7" transform="rotate(0 346 174)"/><ellipse cx="346" cy="174" rx="14.1" ry="8.4" fill="#c6b59c" transform="rotate(0 346 174)"/><ellipse cx="344.6" cy="172.3" rx="8.5" ry="4.2" fill="#fff" opacity=".16" transform="rotate(0 346 174)"/><ellipse cx="315.6" cy="191.2" rx="11.5" ry="9.1" fill="#4e3c2e" opacity=".7" transform="rotate(-15 315.6 190)"/><ellipse cx="315.6" cy="190" rx="10.2" ry="7.7" fill="#bfad95" transform="rotate(-15 315.6 190)"/><ellipse cx="314.6" cy="188.5" rx="6.1" ry="3.9" fill="#fff" opacity=".16" transform="rotate(-15 315.6 190)"/><ellipse cx="337.5" cy="191.2" rx="18.2" ry="10.4" fill="#4e3c2e" opacity=".7" transform="rotate(-5 337.5 190)"/><ellipse cx="337.5" cy="190" rx="16.9" ry="9.0" fill="#d0bea8" transform="rotate(-5 337.5 190)"/><ellipse cx="335.8" cy="188.2" rx="10.2" ry="4.5" fill="#fff" opacity=".16" transform="rotate(-5 337.5 190)"/><ellipse cx="321.4" cy="209.2" rx="21.6" ry="11.9" fill="#4e3c2e" opacity=".7" transform="rotate(-8 321.4 208)"/><ellipse cx="321.4" cy="208" rx="20.3" ry="10.5" fill="#d4c0ad" transform="rotate(-8 321.4 208)"/><ellipse cx="319.4" cy="205.9" rx="12.2" ry="5.2" fill="#fff" opacity=".16" transform="rotate(-8 321.4 208)"/><ellipse cx="345.5" cy="207.2" rx="9.8" ry="9.1" fill="#4e3c2e" opacity=".7" transform="rotate(0 345.5 206)"/><ellipse cx="345.5" cy="206" rx="8.5" ry="7.7" fill="#c5b19b" transform="rotate(0 345.5 206)"/><ellipse cx="344.7" cy="204.5" rx="5.1" ry="3.9" fill="#fff" opacity=".16" transform="rotate(0 345.5 206)"/><ellipse cx="305" cy="228.2" rx="15.4" ry="10.9" fill="#4e3c2e" opacity=".7" transform="rotate(-15 305 227)"/><ellipse cx="305" cy="227" rx="14.1" ry="9.5" fill="#aca183" transform="rotate(-15 305 227)"/><ellipse cx="303.6" cy="225.1" rx="8.5" ry="4.7" fill="#fff" opacity=".16" transform="rotate(-15 305 227)"/><ellipse cx="330" cy="231.89999999999998" rx="21.1" ry="11.1" fill="#4e3c2e" opacity=".7" transform="rotate(-8 330 230.7)"/><ellipse cx="330" cy="230.7" rx="19.8" ry="9.7" fill="#d2beaa" transform="rotate(-8 330 230.7)"/><ellipse cx="328.0" cy="228.8" rx="11.9" ry="4.8" fill="#fff" opacity=".16" transform="rotate(-8 330 230.7)"/><ellipse cx="297.5" cy="245.89999999999998" rx="11.5" ry="11.9" fill="#4e3c2e" opacity=".7" transform="rotate(-15 297.5 244.7)"/><ellipse cx="297.5" cy="244.7" rx="10.2" ry="10.5" fill="#bfac98" transform="rotate(-15 297.5 244.7)"/><ellipse cx="296.5" cy="242.6" rx="6.1" ry="5.2" fill="#fff" opacity=".16" transform="rotate(-15 297.5 244.7)"/><ellipse cx="321" cy="249.2" rx="19.9" ry="11.1" fill="#4e3c2e" opacity=".7" transform="rotate(-8 321 248)"/><ellipse cx="321" cy="248" rx="18.6" ry="9.7" fill="#cab6a2" transform="rotate(-8 321 248)"/><ellipse cx="319.1" cy="246.1" rx="11.2" ry="4.8" fill="#fff" opacity=".16" transform="rotate(-8 321 248)"/><ellipse cx="300" cy="267.2" rx="17.1" ry="10.9" fill="#4e3c2e" opacity=".7" transform="rotate(-10 300 266)"/><ellipse cx="300" cy="266" rx="15.8" ry="9.5" fill="#c7b2a1" transform="rotate(-10 300 266)"/><ellipse cx="298.4" cy="264.1" rx="9.5" ry="4.7" fill="#fff" opacity=".16" transform="rotate(-10 300 266)"/><ellipse cx="325" cy="269.2" rx="13.2" ry="10.2" fill="#4e3c2e" opacity=".7" transform="rotate(0 325 268)"/><ellipse cx="325" cy="268" rx="11.9" ry="8.8" fill="#bfaa99" transform="rotate(0 325 268)"/><ellipse cx="323.8" cy="266.2" rx="7.1" ry="4.4" fill="#fff" opacity=".16" transform="rotate(0 325 268)"/><ellipse cx="292" cy="287.2" rx="14.9" ry="10.9" fill="#4e3c2e" opacity=".7" transform="rotate(-10 292 286)"/><ellipse cx="292" cy="286" rx="13.6" ry="9.5" fill="#cab5a4" transform="rotate(-10 292 286)"/><ellipse cx="290.6" cy="284.1" rx="8.1" ry="4.7" fill="#fff" opacity=".16" transform="rotate(-10 292 286)"/><ellipse cx="316" cy="289.2" rx="14.3" ry="10.2" fill="#4e3c2e" opacity=".7" transform="rotate(0 316 288)"/><ellipse cx="316" cy="288" rx="13.0" ry="8.8" fill="#bfada1" transform="rotate(0 316 288)"/><ellipse cx="314.7" cy="286.2" rx="7.8" ry="4.4" fill="#fff" opacity=".16" transform="rotate(0 316 288)"/><ellipse cx="288" cy="307.2" rx="13.7" ry="10.9" fill="#4e3c2e" opacity=".7" transform="rotate(-8 288 306)"/><ellipse cx="288" cy="306" rx="12.4" ry="9.5" fill="#cbb6a5" transform="rotate(-8 288 306)"/><ellipse cx="286.8" cy="304.1" rx="7.5" ry="4.7" fill="#fff" opacity=".16" transform="rotate(-8 288 306)"/><ellipse cx="310" cy="309.2" rx="13.7" ry="10.2" fill="#4e3c2e" opacity=".7" transform="rotate(0 310 308)"/><ellipse cx="310" cy="308" rx="12.4" ry="8.8" fill="#c2ad9c" transform="rotate(0 310 308)"/><ellipse cx="308.8" cy="306.2" rx="7.5" ry="4.4" fill="#fff" opacity=".16" transform="rotate(0 310 308)"/><ellipse cx="296" cy="329.2" rx="18.2" ry="11.3" fill="#4e3c2e" opacity=".7" transform="rotate(0 296 328)"/><ellipse cx="296" cy="328" rx="16.9" ry="9.9" fill="#cab5a4" transform="rotate(0 296 328)"/><ellipse cx="294.3" cy="326.0" rx="10.2" ry="5.0" fill="#fff" opacity=".16" transform="rotate(0 296 328)"/><ellipse cx="297" cy="349.2" rx="17.1" ry="10.2" fill="#4e3c2e" opacity=".7" transform="rotate(0 297 348)"/><ellipse cx="297" cy="348" rx="15.8" ry="8.8" fill="#bfaa99" transform="rotate(0 297 348)"/><ellipse cx="295.4" cy="346.2" rx="9.5" ry="4.4" fill="#fff" opacity=".16" transform="rotate(0 297 348)"/></g><path d="M368.7 110 L369 128 L367 150 L359.6 172.6 L351.6 211 L344.5 250 L338 271 L327 322.6 L320 348" stroke="#463a2e" stroke-width="6" fill="none" opacity=".28" filter="url(#b2)"/><path d="M322 128 L318 150 L314.4 172.6 L300 211 L287 250 L277.6 271 L272 322.6 L273 348" stroke="#4a3e32" stroke-width="5" fill="none" opacity=".22" filter="url(#b2)"/></g><path d="M322 112 C 328 103 340 101 352 103 C 362 104 368 108 370 114 L 370 128 C 356 134 336 132 320 127 Z" fill="#675034" filter="url(#rough)"/><path d="M324 122 C 336 128 356 129 369 124 L 369 129 C 356 134 336 132 322 128 Z" fill="#3e3020" opacity=".7" filter="url(#b1)"/><ellipse cx="333" cy="118.5" rx="5" ry="5.5" fill="#c2ba58" opacity=".95" filter="url(#b1)"/><ellipse cx="355" cy="119" rx="6.5" ry="5" fill="#c6cc46" opacity=".95" filter="url(#b1)"/><path d="M284 250 C 282 262 288 276 296 286 C 304 296 314 304 318 312" stroke="#cbbcae" stroke-width="2" fill="none" filter="url(#b05)"/><path d="M304 221 l5 -3 l6 2 l-4 5 l-6 2 z" fill="#b4b088" filter="url(#b05)"/><path d="M312 168 C 306 174 302 180 299 186" stroke="#b8a888" stroke-width="1.6" fill="none" filter="url(#b05)"/><g filter="url(#b05)"><path d="M368 0 L388 0 C 384 22 376 42 369 60 L 359 92 L 355 88 C 360 70 364 50 366 33 Z" fill="url(#st2)"/><path d="M372 0 C 371 20 368 40 364 60" stroke="#6a9016" stroke-width="2" fill="none" opacity=".6"/><path d="M355.8 0 L369 0 C 368 30 362 60 357.5 83 L 352.5 112 L 335.5 112 C 337.5 97 340 90 342.6 83 C 348 60 354 30 355.8 0 Z" fill="url(#st1)"/><path d="M351 102 C 358 92 372 84 391 77 L 391 90 C 376 93 366 99 359 112 Z" fill="#a4ca34"/><path d="M353 101 C 360 92 374 85 391 78.5" stroke="#cce270" stroke-width="2" fill="none" opacity=".8"/><path d="M346 115 C 352 104 366 102 376 106 S 388 111 391 113.5 L 391 131 C 384 123 374 117 364 117 S 352 123 349 130 Z" fill="url(#st4)"/></g><g stroke="#5e4a2c" stroke-width=".8" fill="none" opacity=".8"><path d="M324 112 l-3 -5 M328 110 l-2 -6 M366 112 l4 -4 M360 108 l3 -5 M345 108 l1 -5 M370 118 l4 -2 M322 120 l-4 -1"/></g><path d="M353 95 l4 -3 l4 3 l-3 6 l-6 5 l-4 -1 z" fill="#e8e0cc" filter="url(#b05)" opacity=".9"/><!--TRUNK-END-->
      <!--DOG-START--><defs>
<linearGradient id="tailg" x1="0" x2="1" y1="0" y2="1"><stop offset="0" stop-color="#34231a"/><stop offset="0.5" stop-color="#5a381f"/><stop offset="1" stop-color="#b4733a"/></linearGradient>
<linearGradient id="bodyg" x1="0" x2="1" y1="0" y2="0"><stop offset="0" stop-color="#d9843a"/><stop offset="0.3" stop-color="#e69a50"/><stop offset="0.7" stop-color="#eea962"/><stop offset="1" stop-color="#eaa85e"/></linearGradient>
<radialGradient id="headg" cx="0.45" cy="0.45" r="0.65"><stop offset="0" stop-color="#ecceac"/><stop offset="0.6" stop-color="#e5bd94"/><stop offset="1" stop-color="#dcac7c"/></radialGradient>
<radialGradient id="tongueg" cx="0.5" cy="0.35" r="0.7"><stop offset="0" stop-color="#c4587c"/><stop offset="1" stop-color="#98345a"/></radialGradient>
<linearGradient id="legL" x1="0" x2="0" y1="0" y2="1"><stop offset="0" stop-color="#e59c54"/><stop offset="0.25" stop-color="#e8a662"/><stop offset="0.65" stop-color="#efb87e"/><stop offset="1" stop-color="#f6d2a8"/></linearGradient>
<linearGradient id="legR" x1="0" x2="0" y1="0" y2="1"><stop offset="0" stop-color="#eba962"/><stop offset="0.55" stop-color="#efba84"/><stop offset="0.8" stop-color="#f8e2cc"/><stop offset="1" stop-color="#ffffff"/></linearGradient>
<linearGradient id="hindg" x1="0" x2="0" y1="0" y2="1"><stop offset="0" stop-color="#d88a46"/><stop offset="0.7" stop-color="#d38442"/><stop offset="1" stop-color="#c87a3c"/></linearGradient>
</defs>
<!-- tail -->
<path d="M50 361 C 56 360 62 368 68 380 C 76 394 84 404 92 412 L 98 432 C 84 435 66 434 56 426 C 44 416 38 398 40 384 C 42 372 46 364 50 361 Z" fill="url(#tailg)" filter="url(#fur)"/>
<path d="M50 362 C 56 364 60 374 64 386 C 66 398 62 408 54 414 C 44 404 40 392 42 380 C 44 370 47 364 50 362 Z" fill="#2e1c10" opacity=".6" filter="url(#b2)"/>
<path d="M60 424 C 70 430 84 432 94 428 L 90 416 C 80 420 70 420 62 416 Z" fill="#d8965a" opacity=".7" filter="url(#b2)"/>

<!-- hind leg + paw -->
<g filter="url(#fur)">
<path d="M108 366 C 96 372 89 392 87 410 C 85 432 85 450 84 468 C 78 486 60 494 55 508 L 55 520 L 108 520 C 112 500 118 470 124 440 Z" fill="url(#hindg)"/>
<path d="M56 514 C 62 507 78 505 92 509 L 96 524 L 56 524 Z" fill="#f4dcc2"/>
</g>
<!-- body -->
<path d="M91 374 C 94 371 98 371 100 374 L 100 384 L 93 382 Z" fill="#f6ece2" filter="url(#b1)" opacity=".9"/>
<g filter="url(#fur)">
<path d="M120 294 C 110 308 104 324 104 340 C 104 355 106 365 106 372 C 103 396 98 420 102 440 L 118 470 L 240 470 L 247 430 C 254 400 242 370 243 340 C 243 325 238 308 231 294 Z" fill="url(#bodyg)"/>
<!-- belly -->
<path d="M150 420 L 204 420 L 202 478 C 190 488 168 488 154 478 Z" fill="#e4a468"/>
<!-- front legs -->
<path d="M116 420 C 113 450 117 480 120 520 L 155 520 C 153 490 156 455 154 425 Z" fill="url(#legL)"/>
<path d="M205 405 C 203 440 208 480 211 520 L 240 520 C 241 490 246 450 244 410 Z" fill="url(#legR)"/>
</g>
<!-- body shading -->
<g filter="url(#b4)">
<path d="M106 340 C 112 370 116 400 112 436 L 100 440 C 97 420 102 396 106 372 Z" fill="#c4702c" opacity=".7"/>
<path d="M128 330 C 140 360 144 400 140 430 L 126 430 C 130 400 126 360 118 335 Z" fill="#efb676" opacity=".7"/>
<path d="M146 340 C 152 370 156 400 154 420 L 144 424 C 146 400 142 370 138 345 Z" fill="#d07e3a" opacity=".45"/>
<path d="M156 436 C 170 444 190 444 204 436 L 204 450 C 190 456 170 456 156 450 Z" fill="#c58048" opacity=".5"/>
<path d="M232 350 C 240 380 244 410 242 440 L 232 440 C 234 410 230 380 224 352 Z" fill="#f2be80" opacity=".75"/>
<path d="M112 440 C 110 460 112 480 116 500 L 122 500 C 120 480 120 460 122 440 Z" fill="#b86a2c" opacity=".6"/>
<path d="M156 476 C 170 486 190 486 202 476 L 202 484 C 190 494 170 494 156 486 Z" fill="#9a5c30" opacity=".6"/>
</g>
<g fill="none" stroke-linecap="round">
<path d="M117 426 C 115 456 117 486 119 519" stroke="#8a4a1e" stroke-width="4" opacity=".6" filter="url(#b2)"/>
<path d="M154.5 432 C 155.5 450 155 466 154 482" stroke="#a8622e" stroke-width="4" opacity=".5" filter="url(#b2)"/>
<path d="M205 414 C 205 440 207 460 208 482" stroke="#a8622e" stroke-width="4" opacity=".5" filter="url(#b2)"/>
<path d="M133 432 C 136 460 137 490 138 514" stroke="#fde6c6" stroke-width="11" opacity=".5" filter="url(#b4)"/>
<path d="M224 416 C 226 444 226 470 226 496" stroke="#fde8cc" stroke-width="11" opacity=".55" filter="url(#b4)"/>
<path d="M98 430 C 94 450 92 470 86 486" stroke="#f0b070" stroke-width="8" opacity=".45" filter="url(#b4)"/>
</g>
<!-- white chest -->
<g filter="url(#fur2)">
<path d="M158 334 C 172 328 190 328 199 333 C 216 338 232 348 238 358 C 238 372 232 384 228 394 C 222 404 212 410 208 416 C 204 426 198 432 190 432 C 178 432 170 424 166 410 C 162 392 158 372 154 358 C 154 348 156 340 158 334 Z" fill="#faf5f0"/>
</g>
<path d="M168 350 C 180 345 200 346 214 354 C 218 370 214 388 206 402 C 198 416 182 418 176 404 C 170 388 166 368 168 350 Z" fill="#ffffff" filter="url(#b4)"/>
<path d="M222 350 C 232 356 238 364 236 376 C 232 388 226 396 220 402 C 224 386 226 368 222 350 Z" fill="#f6d9ba" opacity=".7" filter="url(#b2)"/>
<!-- neck cream -->
<ellipse cx="178" cy="294" rx="38" ry="22" fill="#f3e3d2" filter="url(#b4)"/>
<!-- collar -->
<g filter="url(#b05)">
<path d="M123 302 C 137 316 158 324 180 327.5 S 212 326 222 318" stroke="#5a3b32" stroke-width="12.5" fill="none" stroke-linecap="round"/>
<path d="M123 299 C 137 313 158 321 180 324.5 S 212 323 222 315" stroke="#7c5a4a" stroke-width="2" fill="none" opacity=".7"/>
<g fill="#f4ecd8"><ellipse cx="139.3" cy="314" rx="4.2" ry="3" transform="rotate(30 139.3 314)"/><ellipse cx="158.7" cy="322.6" rx="4.4" ry="3" transform="rotate(15 158.7 322.6)"/><ellipse cx="180" cy="327.5" rx="4.6" ry="3"/><ellipse cx="201.9" cy="325" rx="4.2" ry="2.8" transform="rotate(-8 201.9 325)"/><ellipse cx="219" cy="317.5" rx="3.4" ry="2.4" transform="rotate(-25 219 317.5)"/></g>
<g fill="#d8b878"><circle cx="148" cy="321" r="1"/><circle cx="169" cy="328" r="1"/><circle cx="191" cy="330" r="1"/><circle cx="211" cy="325" r="1"/><circle cx="149" cy="315" r=".9"/><circle cx="170" cy="322" r=".9"/><circle cx="191" cy="324" r=".9"/></g>
</g>
<!-- fur over collar -->
<g filter="url(#fur2)"><path d="M124 292 C 136 302 152 309 172 312 C 195 315 213 309 226 300 L 232 286 L 118 284 Z" fill="#efd6ba"/></g>
<!--H1--><!-- head base -->
<g filter="url(#furh)">
<path d="M144 133 C 160 126 200 126 216 136 C 230 150 238 170 240 192 C 250 210 257 234 252 254 C 248 272 238 284 226 292 C 218 298 210 302 200 304 L 150 304 C 140 302 130 298 122 292 C 106 282 94 270 92 254 C 90 234 102 214 119 196 C 119 170 128 148 144 133 Z" fill="url(#headg)"/>
</g>
<g fill="none" stroke-linecap="round" filter="url(#b05)"><path stroke="#f2dcc0" stroke-width="1.1" opacity="0.7" d="M128.9 137.4Q126.1 137.3 125.1 135.9M99.7 225.1Q95.4 227.5 91.8 228.3M109.4 278.1Q109.1 279.3 108.6 281.9M227.6 296.8Q230.6 298.6 234.8 297.6"/><path stroke="#fff6ea" stroke-width="0.7" opacity="0.7" d="M142.9 133.1Q141.5 132.4 139.5 131.4M96.7 231.1Q94.0 228.2 91.4 226.7M249.5 254.7Q252.6 258.7 253.3 261.3M247.4 212.0Q250.0 210.5 253.0 207.6"/><path stroke="#ecd0ae" stroke-width="0.9" opacity="0.55" d="M130.0 137.0Q131.2 136.5 130.4 134.8M105.7 214.0Q103.8 212.8 100.5 210.7M94.0 240.3Q93.5 240.7 90.3 241.4M97.9 260.6Q94.3 260.6 91.7 261.0M228.1 287.9Q230.6 292.4 232.9 294.1M250.5 251.0Q254.1 252.7 258.4 257.1M176.2 130.0Q176.3 128.1 177.8 125.1"/><path stroke="#ecd0ae" stroke-width="1.1" opacity="0.7" d="M138.6 134.4Q138.4 132.6 138.9 131.7M105.3 214.4Q105.0 210.9 103.6 209.6M94.9 234.6Q92.2 232.5 90.9 231.9M247.9 258.2Q249.5 258.5 251.4 259.6"/><path stroke="#ecd0ae" stroke-width="1.1" opacity="0.85" d="M125.0 138.6Q126.5 135.9 125.2 133.9M247.8 258.4Q249.0 258.1 250.8 259.4M248.5 216.5Q251.2 220.1 256.3 222.7M245.1 206.6Q247.5 205.4 250.7 203.6"/><path stroke="#efe2dc" stroke-width="0.7" opacity="0.55" d="M123.2 139.1Q120.9 138.3 121.3 136.5M96.0 150.0Q94.1 147.4 94.5 145.7M96.9 155.0Q94.1 156.5 89.5 157.0M119.1 193.9Q119.9 195.4 118.9 198.8"/><path stroke="#efe2dc" stroke-width="0.7" opacity="0.85" d="M123.7 139.0Q123.4 136.1 121.1 135.3M110.7 188.9Q108.1 188.8 106.8 190.4"/><path stroke="#f6e6d2" stroke-width="0.7" opacity="0.7" d="M137.4 134.8Q138.8 131.4 139.6 130.0M251.5 244.6Q254.3 244.9 256.6 247.8M192.7 133.2Q197.5 130.7 199.3 130.3"/><path stroke="#f2dcc0" stroke-width="0.7" opacity="0.55" d="M134.9 135.6Q136.3 133.8 137.5 131.0M249.3 220.1Q251.8 221.7 255.8 221.5M240.0 196.4Q242.4 196.7 243.1 194.8"/><path stroke="#ecd0ae" stroke-width="0.7" opacity="0.85" d="M125.1 138.5Q125.6 137.6 123.6 136.3M94.0 240.5Q92.8 243.3 91.4 243.0M94.0 246.9Q91.9 244.6 88.2 244.3M240.1 196.6Q242.5 199.5 246.9 199.6M238.0 192.8Q238.4 191.2 241.5 190.5"/><path stroke="#ffffff" stroke-width="1.1" opacity="0.85" d="M107.3 145.3Q106.7 141.7 108.3 140.3M110.6 188.7Q110.0 191.0 107.4 192.1"/><path stroke="#f6eeea" stroke-width="1.1" opacity="0.7" d="M113.7 142.7Q112.2 138.9 111.4 136.8M108.1 183.8Q107.3 187.7 104.0 189.5M110.1 187.7Q107.8 192.0 107.8 193.4"/><path stroke="#efe2dc" stroke-width="1.1" opacity="0.55" d="M118.3 140.9Q117.1 141.2 115.2 139.9"/><path stroke="#f6eeea" stroke-width="1.1" opacity="0.85" d="M110.4 144.1Q108.9 142.2 108.9 139.9M97.3 149.4Q95.5 146.6 93.0 145.8M102.9 147.1Q103.5 146.0 103.9 144.2M108.0 183.5Q105.3 187.4 102.5 188.7"/><path stroke="#efe2dc" stroke-width="0.9" opacity="0.55" d="M117.7 141.1Q119.0 137.9 118.8 135.6"/><path stroke="#f6eeea" stroke-width="1.1" opacity="0.55" d="M108.5 144.8Q108.8 141.9 110.5 138.9M107.3 182.1Q104.7 184.5 104.7 184.5"/><path stroke="#ffffff" stroke-width="0.7" opacity="0.55" d="M114.3 142.5Q114.4 142.2 113.2 140.0"/><path stroke="#ffffff" stroke-width="0.9" opacity="0.55" d="M102.1 147.4Q102.4 145.0 101.7 143.4"/><path stroke="#f6eeea" stroke-width="0.7" opacity="0.85" d="M114.1 142.6Q112.9 142.4 111.4 141.7M97.0 155.2Q94.1 155.7 90.9 154.6M98.3 159.4Q94.0 159.3 92.3 159.2"/><path stroke="#f6eeea" stroke-width="0.9" opacity="0.85" d="M103.7 146.8Q101.9 143.5 97.9 142.8M96.2 152.8Q93.0 153.7 91.1 156.2"/><path stroke="#f6eeea" stroke-width="0.9" opacity="0.7" d="M98.3 159.6Q95.9 161.6 91.2 163.2"/><path stroke="#ffffff" stroke-width="0.7" opacity="0.85" d="M96.2 152.8Q94.2 155.5 92.6 158.4"/><path stroke="#f6eeea" stroke-width="0.7" opacity="0.55" d="M99.5 163.4Q98.5 164.9 96.1 164.6"/><path stroke="#f6eeea" stroke-width="0.7" opacity="0.7" d="M95.6 150.7Q91.0 150.5 89.4 152.7M104.9 177.4Q104.0 179.1 102.3 181.0"/><path stroke="#efe2dc" stroke-width="0.9" opacity="0.7" d="M98.3 159.6Q94.9 161.6 94.2 164.4M117.9 193.3Q119.5 197.6 119.0 203.5"/><path stroke="#ffffff" stroke-width="1.1" opacity="0.55" d="M95.4 150.0Q94.1 150.3 90.1 150.2M117.0 192.9Q115.6 196.7 113.8 198.3"/><path stroke="#f6eeea" stroke-width="0.9" opacity="0.55" d="M108.0 183.5Q106.4 184.7 104.7 185.7M101.9 171.3Q100.0 173.2 97.1 172.6M110.1 187.8Q107.2 188.4 106.5 190.1M117.4 193.1Q117.6 199.5 115.9 203.7"/><path stroke="#ecd0ae" stroke-width="0.7" opacity="0.7" d="M107.4 212.1Q107.2 210.3 106.0 209.1M106.0 213.6Q104.7 210.8 103.0 211.1M236.4 279.0Q238.8 281.3 238.5 283.4M245.9 208.3Q250.8 211.4 253.8 211.7"/><path stroke="#f2dcc0" stroke-width="0.7" opacity="0.7" d="M114.9 203.6Q113.3 201.6 109.6 200.6M118.6 286.3Q118.1 290.4 116.0 293.9M250.7 249.5Q252.9 250.1 253.4 253.1M252.6 238.3Q255.6 238.4 259.8 237.2M249.3 220.4Q251.1 219.8 253.3 218.9"/><path stroke="#ecd0ae" stroke-width="0.9" opacity="0.85" d="M117.6 200.5Q116.0 198.7 116.7 197.2M195.1 133.8Q194.2 131.9 193.9 127.7M177.9 130.0Q176.7 126.8 178.0 126.4M152.5 131.4Q149.7 129.7 149.7 129.4"/><path stroke="#fff6ea" stroke-width="0.7" opacity="0.85" d="M104.7 215.0Q99.7 213.9 96.5 215.6M117.7 285.5Q116.1 286.5 115.7 288.8"/><path stroke="#fff6ea" stroke-width="1.1" opacity="0.85" d="M109.8 209.3Q106.8 207.6 103.5 207.8M99.7 225.1Q94.9 222.9 92.4 222.8M99.5 225.4Q98.1 225.0 97.3 222.4M105.3 274.3Q102.8 278.1 100.0 282.0M94.9 255.1Q92.0 259.0 90.4 262.4M230.9 285.0Q233.3 287.1 233.9 289.0"/><path stroke="#fff6ea" stroke-width="1.1" opacity="0.55" d="M107.9 211.5Q106.2 210.7 104.8 208.9"/><path stroke="#f6e6d2" stroke-width="1.1" opacity="0.7" d="M110.0 209.2Q107.1 207.4 103.6 208.1M228.8 300.2Q232.0 298.3 232.2 297.0M238.7 193.9Q239.6 192.3 241.7 192.8M143.8 132.9Q141.8 131.2 141.8 129.2"/><path stroke="#f2dcc0" stroke-width="0.9" opacity="0.7" d="M102.3 219.8Q100.0 220.1 99.2 220.5M113.3 281.6Q114.1 283.5 112.3 285.6M109.1 277.9Q106.5 278.2 105.9 281.2M228.3 287.7Q230.4 291.2 230.2 293.1M249.2 255.3Q254.6 257.6 257.0 257.1M237.3 192.2Q240.4 192.2 241.8 190.9"/><path stroke="#f6e6d2" stroke-width="1.1" opacity="0.85" d="M95.0 234.4Q91.6 233.0 88.9 232.3M104.7 215.0Q100.9 213.0 99.5 211.4M94.0 242.1Q90.4 242.0 88.7 242.1M99.0 262.6Q95.6 265.2 92.5 270.0M230.6 303.7Q233.1 301.2 233.2 300.8M247.6 258.9Q251.6 261.2 252.8 260.5M243.7 203.8Q246.6 206.2 252.2 208.0M177.7 130.0Q176.8 129.2 177.4 127.2"/><path stroke="#fff6ea" stroke-width="1.1" opacity="0.7" d="M93.9 236.6Q91.5 235.6 86.7 233.9M234.8 280.8Q238.2 282.9 239.0 282.2M242.9 269.2Q246.7 268.2 250.1 269.7M252.9 235.8Q255.4 235.4 256.1 236.3M185.4 131.4Q186.7 129.1 186.8 128.5M179.6 130.0Q180.2 129.5 179.6 127.2"/><path stroke="#ecd0ae" stroke-width="1.1" opacity="0.55" d="M97.9 228.7Q95.5 228.2 94.5 229.0M120.2 303.2Q117.6 299.8 114.5 299.4M226.9 294.4Q230.3 292.6 234.8 292.9M246.9 210.2Q247.0 208.0 250.0 206.0M184.7 131.2Q187.6 130.7 188.1 127.4"/><path stroke="#fff6ea" stroke-width="0.9" opacity="0.85" d="M103.3 217.9Q100.3 217.2 96.1 219.1M123.2 296.8Q119.8 297.4 118.7 296.8M252.3 233.3Q254.1 230.5 257.4 229.5"/><path stroke="#f6e6d2" stroke-width="0.9" opacity="0.55" d="M94.0 236.5Q89.4 238.2 87.7 239.0M109.5 278.2Q108.3 283.7 106.5 287.3M235.3 280.2Q237.9 281.5 239.3 285.3M167.4 130.0Q166.9 126.8 165.5 125.0"/><path stroke="#fff6ea" stroke-width="0.9" opacity="0.7" d="M94.0 236.9Q91.4 238.6 89.8 238.7M107.5 276.4Q105.4 277.9 101.6 281.1M184.2 131.1Q183.9 128.7 186.0 125.6M147.1 132.3Q145.8 131.0 142.0 128.9"/><path stroke="#f2dcc0" stroke-width="1.1" opacity="0.55" d="M94.0 237.2Q91.3 235.9 91.4 236.1M102.0 268.2Q101.1 270.3 98.6 270.3M252.8 237.1Q255.7 239.5 257.4 242.7"/><path stroke="#f6e6d2" stroke-width="0.7" opacity="0.85" d="M94.0 236.5Q92.0 238.0 87.2 240.1M249.0 218.7Q249.7 217.2 252.3 217.0M192.9 133.3Q193.5 132.3 196.8 131.6M176.7 130.0Q177.4 126.8 180.9 125.3"/><path stroke="#fff6ea" stroke-width="0.9" opacity="0.55" d="M97.9 260.7Q95.8 262.3 93.6 264.9M102.4 268.9Q99.7 272.1 95.8 274.5M250.9 227.1Q255.0 227.4 256.7 227.6M169.6 130.0Q170.2 126.8 169.8 125.8"/><path stroke="#f6e6d2" stroke-width="0.9" opacity="0.85" d="M97.0 258.9Q91.7 261.1 89.0 261.0M123.4 295.6Q120.5 293.8 115.6 294.6M151.7 131.5Q152.5 129.7 151.6 128.0"/><path stroke="#f6e6d2" stroke-width="0.9" opacity="0.7" d="M101.1 266.5Q100.9 266.9 98.6 269.2M227.7 297.1Q229.4 297.8 231.8 297.6M158.4 130.3Q158.2 126.3 161.0 124.5"/><path stroke="#f6e6d2" stroke-width="0.7" opacity="0.55" d="M97.8 260.5Q93.6 259.8 90.6 262.1M95.2 255.7Q94.2 258.4 93.0 259.6M237.2 278.2Q238.6 281.7 241.2 285.5M227.7 288.3Q230.3 290.2 232.3 293.3M189.5 132.4Q190.7 129.8 193.1 129.9"/><path stroke="#ecd0ae" stroke-width="0.9" opacity="0.7" d="M117.9 285.7Q117.0 291.8 116.2 295.8M250.8 249.0Q255.3 250.3 258.6 250.2M251.4 245.3Q255.9 245.3 257.6 247.0"/><path stroke="#ecd0ae" stroke-width="0.7" opacity="0.55" d="M106.7 275.7Q104.3 277.3 104.0 278.6M116.8 308.8Q115.0 308.8 110.9 307.5M249.0 255.9Q250.2 258.6 250.4 259.2M251.6 244.1Q253.2 245.8 257.4 244.4M247.6 213.0Q250.7 213.9 251.2 212.8M252.7 235.0Q255.7 237.4 256.6 238.0M145.1 132.7Q146.9 130.8 147.2 129.7"/><path stroke="#f2dcc0" stroke-width="0.7" opacity="0.85" d="M110.7 279.3Q108.8 280.5 106.5 284.3M240.7 274.0Q240.9 276.9 243.1 278.2M164.6 130.0Q163.8 126.4 165.7 125.2"/><path stroke="#eaa866" stroke-width="1.1" opacity="0.7" d="M114.3 312.8Q111.1 312.6 108.2 313.7M88.1 458.8Q84.6 459.0 83.6 460.4M88.0 459.4Q84.5 458.0 82.1 459.5M88.4 457.6Q86.5 456.2 84.4 457.4M239.8 495.5Q242.7 494.8 245.9 496.8M242.5 456.5Q246.4 460.1 250.6 462.4M240.8 478.8Q244.8 479.2 247.3 481.5M247.9 387.0Q252.4 386.6 255.2 388.6M248.4 389.0Q251.8 390.7 253.8 390.1"/><path stroke="#f0ba80" stroke-width="0.9" opacity="0.7" d="M112.0 316.5Q109.1 314.7 107.3 315.2M242.3 458.9Q245.4 462.1 246.2 462.3M248.4 389.2Q250.7 391.1 251.6 390.4M249.2 392.0Q252.3 391.3 255.2 389.4"/><path stroke="#eaa866" stroke-width="0.7" opacity="0.7" d="M115.1 311.5Q111.8 311.7 106.7 311.5M239.6 500.4Q240.9 504.0 243.8 504.9M239.7 498.6Q242.6 500.7 243.0 499.8M240.0 333.9Q244.7 335.3 248.4 339.1M238.1 322.8Q241.1 321.6 244.9 323.0"/><path stroke="#f2dcc0" stroke-width="1.1" opacity="0.85" d="M119.9 303.6Q117.2 305.5 112.3 305.4M119.8 303.8Q118.5 304.3 115.0 304.9M242.7 269.7Q245.0 272.6 245.3 275.1M241.9 200.3Q243.9 197.9 244.9 197.7"/><path stroke="#fff6ea" stroke-width="0.7" opacity="0.55" d="M117.6 307.4Q114.9 308.3 111.5 309.3M230.1 302.7Q232.5 304.4 237.7 305.3M232.0 283.8Q233.0 286.1 233.8 290.4M245.3 264.0Q248.5 264.1 253.3 264.3M252.9 235.6Q256.3 234.6 258.2 235.1M154.7 131.0Q153.3 130.6 149.4 128.2"/><path stroke="#f0ba80" stroke-width="0.7" opacity="0.7" d="M113.9 313.4Q110.8 311.9 110.7 311.0M106.1 340.0Q102.6 342.4 99.8 342.3M111.3 318.9Q109.2 319.2 109.2 317.4M106.5 346.5Q106.0 348.7 103.7 348.5M107.8 363.3Q105.2 363.9 103.0 363.9M92.7 444.4Q88.9 445.2 86.0 443.7M57.0 509.6Q56.7 510.2 53.5 511.0"/><path stroke="#fbe0c0" stroke-width="0.9" opacity="0.7" d="M106.3 339.2Q105.8 338.2 102.7 338.5M57.0 518.0Q55.9 516.4 54.4 517.2M242.7 453.3Q245.8 454.6 249.5 457.5M243.9 422.4Q246.5 422.4 248.4 423.8M247.4 385.2Q250.1 386.9 250.7 387.2"/><path stroke="#f4c894" stroke-width="0.9" opacity="0.85" d="M107.3 335.0Q106.3 333.3 103.6 332.9M90.2 449.9Q87.8 449.0 87.0 447.7M239.4 507.8Q241.2 508.5 244.0 508.8M239.1 328.6Q241.1 328.9 243.7 329.5"/><path stroke="#eaa866" stroke-width="0.9" opacity="0.7" d="M110.1 323.7Q105.9 322.1 101.8 322.7M93.5 442.6Q90.7 442.8 89.5 441.1M239.4 507.1Q244.3 510.0 246.4 512.0M245.2 414.6Q248.9 414.0 249.8 414.4"/><path stroke="#f0ba80" stroke-width="1.1" opacity="0.7" d="M108.6 329.7Q105.4 328.7 103.2 329.4M239.4 505.9Q240.3 509.5 243.7 510.3M243.8 427.4Q245.0 427.9 248.9 430.5M242.6 366.4Q246.1 364.9 247.9 362.3M241.0 355.2Q242.2 354.2 245.5 353.9M237.6 319.5Q240.0 318.6 243.9 316.4M237.7 320.5Q239.5 320.9 242.6 320.9"/><path stroke="#eaa866" stroke-width="0.9" opacity="0.85" d="M110.5 322.1Q110.0 322.2 107.9 321.0M86.1 467.8Q82.2 468.9 81.1 470.0M59.6 502.3Q57.7 503.0 53.3 504.1M57.0 505.2Q55.2 505.4 52.4 507.5M249.7 396.0Q252.3 396.3 257.2 399.0M241.0 357.3Q245.0 360.2 248.9 363.2"/><path stroke="#fbe0c0" stroke-width="0.7" opacity="0.7" d="M107.2 335.5Q106.8 334.0 103.7 334.8M241.0 350.2Q243.0 348.3 245.3 349.1M241.0 343.2Q241.3 344.4 244.5 344.0M238.8 327.2Q241.4 329.3 242.0 329.9"/><path stroke="#fbe0c0" stroke-width="1.1" opacity="0.85" d="M107.3 335.2Q103.6 335.1 100.5 337.5M106.6 348.3Q105.4 350.4 102.5 350.2M80.8 475.2Q80.1 475.0 78.5 471.9M240.7 481.2Q242.1 481.9 243.4 483.8M246.1 411.2Q250.7 413.6 252.4 418.3M245.3 376.8Q248.9 377.8 253.0 381.6M235.8 314.0Q238.5 314.2 240.4 315.9"/><path stroke="#f4c894" stroke-width="1.1" opacity="0.55" d="M109.7 325.6Q106.8 327.7 102.3 327.5M82.3 473.3Q79.6 473.1 77.1 470.8M239.8 497.0Q241.1 499.0 242.7 499.8M241.3 473.1Q243.6 475.0 248.7 478.7M243.0 449.6Q245.5 450.0 248.5 448.7M246.6 381.9Q249.4 383.4 250.8 383.1M238.0 322.3Q242.0 323.8 246.2 325.3M235.7 313.9Q238.3 312.3 239.7 312.4"/><path stroke="#f4c894" stroke-width="1.1" opacity="0.85" d="M110.5 322.1Q107.6 320.3 106.4 321.0M106.0 340.4Q102.1 341.2 101.1 339.7M67.0 492.6Q66.8 492.1 65.7 489.1M243.6 431.4Q246.8 433.1 250.1 434.8M243.7 429.6Q247.0 431.4 249.0 431.4"/><path stroke="#f4c894" stroke-width="0.9" opacity="0.7" d="M107.7 362.5Q105.4 362.6 100.7 365.4M239.7 498.0Q244.4 498.7 247.6 499.1M240.2 486.7Q243.0 488.3 245.5 488.0"/><path stroke="#f0ba80" stroke-width="0.7" opacity="0.55" d="M106.7 349.6Q104.3 352.9 101.5 354.5M58.8 503.3Q55.1 501.9 52.8 502.8M238.7 326.2Q242.5 324.8 245.4 325.4"/><path stroke="#f0ba80" stroke-width="0.9" opacity="0.85" d="M107.2 355.7Q103.8 357.7 100.3 359.2M93.8 441.9Q91.5 439.1 89.1 437.4M89.7 451.7Q87.0 452.7 84.5 455.3M74.1 483.5Q71.7 482.7 71.4 479.6M85.1 469.9Q83.1 468.0 84.1 467.3M77.3 479.6Q73.9 477.3 70.7 475.7M241.7 467.4Q243.0 469.5 246.4 473.2"/><path stroke="#eaa866" stroke-width="0.9" opacity="0.55" d="M107.9 364.4Q107.3 364.2 103.9 362.9M89.9 450.6Q87.4 451.3 86.3 452.8M240.1 488.0Q243.2 488.4 246.9 488.7M243.1 445.8Q243.8 445.8 246.5 447.4M249.9 395.2Q253.5 394.3 255.1 394.4M247.9 403.7Q249.3 406.2 252.5 408.5M246.0 379.6Q248.2 378.3 250.6 377.4"/><path stroke="#fbe0c0" stroke-width="1.1" opacity="0.7" d="M108.0 365.8Q106.0 365.1 104.7 365.3M80.1 476.1Q77.3 475.7 73.3 474.5"/><path stroke="#fbe0c0" stroke-width="0.7" opacity="0.85" d="M107.0 352.8Q105.8 352.6 102.8 351.7M105.6 368.7Q102.3 366.5 100.4 365.2"/><path stroke="#f0ba80" stroke-width="1.1" opacity="0.55" d="M106.4 344.8Q103.7 347.8 99.5 349.8M104.3 369.5Q100.5 370.5 96.4 369.0M75.5 481.8Q74.4 482.2 72.3 479.7M76.2 480.9Q73.3 482.1 69.6 481.2M241.4 471.1Q244.6 474.1 248.6 477.6M243.9 423.0Q246.8 423.0 247.1 424.1M247.4 385.0Q250.2 386.2 251.0 386.6M241.0 351.5Q245.4 353.6 247.2 353.0"/><path stroke="#8a5a30" stroke-width="1.1" opacity="0.7" d="M96.1 375.0Q96.8 373.2 95.6 371.6M70.2 385.5Q74.2 384.7 75.7 386.6M68.2 428.7Q65.3 431.5 64.2 433.1"/><path stroke="#4a3020" stroke-width="1.1" opacity="0.85" d="M97.5 374.1Q97.2 372.3 95.4 372.2M77.3 394.6Q81.3 395.5 83.4 394.4M47.9 367.3Q46.0 367.1 43.0 364.6M46.5 369.3Q46.3 367.7 45.5 366.7M47.9 411.5Q47.0 413.7 44.4 415.9M59.4 426.5Q59.4 427.7 57.7 429.9"/><path stroke="#6a4426" stroke-width="0.9" opacity="0.85" d="M95.4 375.5Q95.2 373.4 95.9 369.7M77.5 394.9Q79.8 393.5 81.1 393.7M73.4 389.7Q75.5 385.9 75.5 383.5M64.5 377.0Q68.4 377.8 70.3 376.9M87.9 431.0Q88.1 434.1 90.5 435.4"/><path stroke="#f4c894" stroke-width="0.7" opacity="0.7" d="M99.5 372.7Q97.8 369.6 95.2 368.8M89.8 450.8Q88.3 450.5 85.2 448.3M244.0 420.2Q247.4 421.6 248.8 425.6M248.1 402.5Q250.1 404.7 251.3 405.0M245.1 415.3Q246.4 415.9 248.9 416.5"/><path stroke="#8a5a30" stroke-width="1.1" opacity="0.85" d="M85.9 400.6Q83.8 401.2 81.6 402.5"/><path stroke="#4a3020" stroke-width="0.7" opacity="0.7" d="M88.9 392.8Q86.6 393.5 83.0 391.8M49.9 363.2Q48.7 360.5 49.0 357.2M88.2 431.0Q88.4 434.0 90.0 439.3M88.4 430.9Q87.4 436.9 85.1 440.3"/><path stroke="#8a5a30" stroke-width="0.7" opacity="0.7" d="M89.7 390.7Q89.0 388.5 87.1 388.0M47.8 411.1Q48.2 413.6 45.9 415.4"/><path stroke="#8a5a30" stroke-width="0.9" opacity="0.55" d="M94.9 377.3Q93.8 375.8 89.8 375.2M70.8 386.3Q72.8 384.0 76.0 382.9M46.9 368.7Q45.2 367.0 43.7 368.1"/><path stroke="#4a3020" stroke-width="1.1" opacity="0.55" d="M86.2 399.9Q82.8 396.7 81.9 395.2M43.9 373.4Q40.0 376.5 37.5 378.3M46.6 406.4Q44.4 406.3 42.6 406.8"/><path stroke="#4a3020" stroke-width="0.7" opacity="0.85" d="M95.4 376.0Q91.8 375.7 86.5 377.1M68.5 383.3Q71.1 381.2 73.2 381.4M50.4 363.4Q52.8 361.2 53.5 361.5M95.7 430.0Q95.8 435.8 93.0 440.6"/><path stroke="#6a4426" stroke-width="0.9" opacity="0.55" d="M93.7 380.3Q91.1 380.2 90.6 377.7M63.0 374.6Q66.0 372.2 66.0 372.5M44.8 400.0Q41.6 403.0 37.1 405.9M47.5 409.9Q44.6 411.3 42.5 413.3"/><path stroke="#6a4426" stroke-width="0.7" opacity="0.7" d="M86.0 400.4Q81.3 400.9 78.9 399.1M42.1 390.1Q38.8 390.6 34.5 389.4M50.5 414.6Q50.0 417.6 48.7 419.8"/><path stroke="#4a3020" stroke-width="0.9" opacity="0.85" d="M88.0 395.3Q84.5 394.5 83.0 396.5M58.7 367.6Q58.9 364.7 56.9 361.4M52.7 364.6Q54.6 361.6 53.6 360.6M42.6 384.9Q40.5 381.8 35.9 381.1"/><path stroke="#8a5a30" stroke-width="1.1" opacity="0.55" d="M94.7 377.7Q91.6 379.4 89.2 380.5M86.4 399.3Q83.8 401.4 79.0 403.3M44.5 372.0Q41.6 370.4 37.8 369.8M48.8 412.5Q44.5 414.9 42.3 418.1M66.3 428.2Q67.3 434.5 69.3 437.9"/><path stroke="#8a5a30" stroke-width="0.7" opacity="0.55" d="M95.3 376.3Q93.3 376.1 90.2 375.9M60.6 370.8Q61.8 370.9 65.3 371.1M43.3 378.7Q40.4 380.8 39.2 380.1"/><path stroke="#4a3020" stroke-width="0.9" opacity="0.7" d="M77.9 395.4Q79.0 394.4 79.4 392.9M60.8 371.0Q61.2 369.6 62.1 368.6M49.0 365.7Q48.2 363.9 47.7 362.3M76.2 430.9Q75.5 433.7 74.2 434.6"/><path stroke="#6a4426" stroke-width="0.9" opacity="0.7" d="M73.3 389.5Q76.0 389.3 80.3 389.3M71.1 386.6Q74.0 385.1 76.5 384.7M43.6 375.3Q40.7 376.8 38.2 378.1M47.7 410.8Q44.9 411.4 40.3 413.5M46.5 406.3Q41.9 409.5 39.5 413.0M75.6 430.7Q73.7 432.8 74.6 436.6M69.9 429.2Q66.6 432.5 64.8 434.4M88.9 430.9Q88.6 437.5 90.4 441.9"/><path stroke="#4a3020" stroke-width="1.1" opacity="0.7" d="M72.8 388.9Q72.9 388.0 75.5 387.5M65.6 378.7Q67.2 378.1 69.2 378.9M42.2 388.7Q38.9 388.5 34.5 391.0M43.3 378.2Q41.0 379.7 39.6 378.3"/><path stroke="#4a3020" stroke-width="0.9" opacity="0.55" d="M60.7 370.9Q62.3 370.5 65.8 372.3"/><path stroke="#8a5a30" stroke-width="0.9" opacity="0.7" d="M66.9 380.8Q69.1 379.8 69.9 380.4"/><path stroke="#6a4426" stroke-width="0.7" opacity="0.55" d="M66.7 380.5Q69.7 379.6 70.1 378.2M54.0 365.2Q56.9 365.5 58.4 363.9"/><path stroke="#6a4426" stroke-width="1.1" opacity="0.7" d="M50.4 363.8Q48.0 364.4 44.0 364.1M54.1 419.5Q49.8 422.1 48.3 422.5M60.8 426.7Q60.6 430.3 60.7 432.7M88.0 431.0Q88.0 433.7 86.4 435.2M90.9 430.6Q88.6 431.6 88.6 435.2"/><path stroke="#6a4426" stroke-width="1.1" opacity="0.85" d="M42.1 389.5Q39.2 391.7 34.2 391.1"/><path stroke="#8a5a30" stroke-width="0.7" opacity="0.85" d="M43.7 374.5Q42.3 374.7 40.5 374.0M45.1 401.1Q42.3 399.5 37.8 400.1M54.8 420.3Q53.2 423.0 53.3 427.8M51.8 416.4Q50.6 418.1 48.3 419.6"/><path stroke="#6a4426" stroke-width="0.7" opacity="0.85" d="M42.2 390.3Q37.7 392.7 35.5 395.8M57.6 424.1Q53.4 425.9 49.3 429.6M60.2 426.5Q59.9 430.0 57.9 432.5"/><path stroke="#8a5a30" stroke-width="0.9" opacity="0.85" d="M47.4 409.4Q44.8 412.3 41.9 415.7M77.5 431.2Q78.1 436.2 80.0 439.4M73.4 430.1Q72.3 432.9 72.8 434.8"/><path stroke="#4a3020" stroke-width="0.7" opacity="0.55" d="M58.6 425.5Q56.3 428.9 52.4 432.5"/><path stroke="#6a4426" stroke-width="1.1" opacity="0.55" d="M59.2 426.3Q59.5 429.6 60.5 433.3"/><path stroke="#f0ba80" stroke-width="1.1" opacity="0.85" d="M96.0 436.9Q93.8 433.7 93.0 433.1M245.8 412.2Q248.8 414.0 249.3 413.4M247.1 384.1Q250.0 384.3 253.7 381.9M244.7 374.7Q245.7 376.3 248.2 376.8M235.9 314.3Q237.8 313.9 238.7 313.8"/><path stroke="#f0ba80" stroke-width="0.7" opacity="0.85" d="M95.6 437.8Q91.6 437.1 90.1 435.7M239.7 497.2Q242.6 498.3 245.2 499.6M240.0 334.0Q242.7 333.9 243.3 336.1"/><path stroke="#f4c894" stroke-width="0.7" opacity="0.55" d="M92.8 444.1Q92.7 441.2 90.0 441.1M70.5 488.0Q69.5 486.8 68.4 485.5M245.0 415.7Q248.6 417.7 250.8 420.8M235.8 314.2Q239.9 311.8 241.8 312.0"/><path stroke="#f4c894" stroke-width="0.9" opacity="0.55" d="M88.7 456.2Q86.8 455.6 85.5 453.5M246.5 381.8Q249.8 382.6 253.0 384.3"/><path stroke="#fbe0c0" stroke-width="0.7" opacity="0.55" d="M89.0 454.9Q87.0 454.3 86.0 453.3"/><path stroke="#fbe0c0" stroke-width="0.9" opacity="0.85" d="M72.4 485.8Q69.0 482.9 67.9 482.4M67.1 492.5Q63.2 493.8 61.0 492.2M241.1 474.7Q244.2 477.5 246.3 479.2M237.8 321.0Q241.2 320.6 244.0 322.1"/><path stroke="#eaa866" stroke-width="1.1" opacity="0.85" d="M80.5 475.6Q78.6 475.1 74.7 473.9M245.7 412.6Q249.1 414.8 253.4 414.2M241.0 344.0Q242.7 343.6 246.2 345.6M241.0 355.5Q244.9 356.2 248.4 355.2"/><path stroke="#fbe0c0" stroke-width="0.9" opacity="0.55" d="M66.9 492.7Q65.0 492.7 64.0 490.0M247.4 405.7Q248.5 405.0 250.5 406.8"/><path stroke="#f0ba80" stroke-width="0.9" opacity="0.55" d="M62.1 499.0Q58.7 496.8 55.8 495.6M240.9 477.9Q243.0 476.7 246.7 477.2M242.0 462.9Q245.1 465.6 250.1 466.8M240.1 489.2Q243.9 489.9 246.5 491.8M241.0 343.7Q243.6 343.8 245.6 346.3M234.1 310.7Q236.9 308.2 238.6 305.9"/><path stroke="#eaa866" stroke-width="0.7" opacity="0.55" d="M65.8 494.1Q64.2 491.9 62.9 491.2M66.6 493.2Q62.9 492.1 62.1 488.4M243.4 437.6Q246.5 435.7 249.3 435.0M249.7 393.9Q252.6 397.0 256.1 398.6"/><path stroke="#eaa866" stroke-width="0.7" opacity="0.85" d="M60.9 500.6Q56.9 499.0 55.6 497.9M241.3 472.0Q244.5 472.9 249.2 476.6M241.4 471.2Q243.3 473.6 246.1 473.8M243.6 430.7Q246.5 430.2 247.7 431.8M243.7 430.3Q245.7 432.8 250.2 436.1"/><path stroke="#fbe0c0" stroke-width="1.1" opacity="0.55" d="M57.0 511.6Q54.3 512.7 53.7 514.0M239.4 508.5Q242.6 507.2 246.0 508.0M243.1 447.6Q244.6 450.7 247.6 452.6"/><path stroke="#f4c894" stroke-width="1.1" opacity="0.7" d="M239.3 509.4Q240.3 510.2 243.0 510.6M242.6 455.1Q245.5 456.8 251.2 455.9M243.2 443.0Q246.4 445.3 249.2 448.8M240.6 337.6Q244.5 335.7 246.4 334.6"/><path stroke="#f4c894" stroke-width="0.7" opacity="0.85" d="M242.5 456.9Q244.2 458.2 247.4 456.8M237.2 316.9Q238.0 317.0 240.5 316.0"/><path stroke="#eaa866" stroke-width="1.1" opacity="0.55" d="M248.3 388.5Q253.5 386.8 255.9 386.4M245.4 377.4Q247.7 377.5 250.3 377.8M241.0 353.7Q242.5 353.5 246.3 354.2"/><path stroke="#f2dcc0" stroke-width="0.9" opacity="0.85" d="M250.8 226.5Q254.9 225.5 257.2 225.9M241.9 200.3Q246.8 202.8 249.5 203.2M160.7 130.0Q159.5 128.4 160.2 127.6"/><path stroke="#7a6a30" stroke-width="0.7" opacity="0.7" d="M233.3 188.1Q234.4 186.6 234.8 182.8M232.7 184.1Q235.0 187.0 239.3 190.7M245.9 150.2Q249.9 152.5 253.6 156.3M236.6 146.8Q240.2 145.6 243.0 144.3"/><path stroke="#caa670" stroke-width="0.9" opacity="0.55" d="M239.6 171.8Q241.2 176.3 242.9 181.5M240.5 170.2Q241.6 171.9 245.1 175.4M233.1 145.1Q231.6 143.7 232.2 141.7M245.1 150.8Q246.3 147.9 248.1 145.0"/><path stroke="#7a6a30" stroke-width="0.7" opacity="0.55" d="M240.5 170.1Q243.3 172.7 244.5 176.8M236.6 177.3Q238.9 179.0 241.6 183.3M236.3 177.7Q240.0 181.6 243.5 184.5"/><path stroke="#7a6a30" stroke-width="0.7" opacity="0.85" d="M235.2 179.7Q238.1 180.9 243.6 184.1M237.0 176.5Q240.8 178.5 244.7 178.2"/><path stroke="#7a6a30" stroke-width="1.1" opacity="0.55" d="M233.0 183.7Q234.4 190.2 236.8 193.9"/><path stroke="#7a6a30" stroke-width="0.9" opacity="0.7" d="M244.2 157.8Q247.9 157.7 252.3 158.0"/><path stroke="#5a4624" stroke-width="0.7" opacity="0.85" d="M243.1 162.8Q244.5 166.2 248.0 168.5M203.6 135.9Q202.0 131.5 202.8 130.0"/><path stroke="#7a6a30" stroke-width="1.1" opacity="0.7" d="M243.4 161.4Q247.9 163.8 251.9 166.0M209.7 137.4Q209.4 134.2 209.2 132.1"/><path stroke="#caa670" stroke-width="1.1" opacity="0.55" d="M245.7 151.3Q249.5 154.5 250.9 155.8M235.3 146.1Q235.2 143.2 235.1 142.5"/><path stroke="#5a4624" stroke-width="0.7" opacity="0.55" d="M242.5 165.4Q245.7 168.4 245.9 168.6"/><path stroke="#caa670" stroke-width="0.9" opacity="0.7" d="M243.7 159.9Q247.0 163.2 247.2 165.8"/><path stroke="#7a6a30" stroke-width="0.9" opacity="0.85" d="M245.7 151.2Q246.5 152.5 248.1 154.5"/><path stroke="#5a4624" stroke-width="1.1" opacity="0.55" d="M243.7 150.2Q246.8 147.0 247.0 146.2M203.0 135.8Q203.8 132.5 202.3 130.4"/><path stroke="#caa670" stroke-width="0.9" opacity="0.85" d="M229.1 143.2Q233.6 141.1 235.9 140.5M205.0 136.3Q203.9 133.8 204.3 133.1"/><path stroke="#7a6a30" stroke-width="0.9" opacity="0.55" d="M238.0 147.5Q239.6 146.3 244.0 145.2M215.2 138.7Q217.1 137.6 216.7 135.9"/><path stroke="#caa670" stroke-width="0.7" opacity="0.55" d="M239.4 148.1Q242.2 148.2 243.0 146.1M242.6 149.6Q243.0 148.8 244.1 145.5"/><path stroke="#7a6a30" stroke-width="1.1" opacity="0.85" d="M244.0 150.3Q247.6 149.1 249.1 149.2M214.6 138.6Q214.1 137.5 212.7 134.3"/><path stroke="#5a4624" stroke-width="0.9" opacity="0.85" d="M243.1 149.9Q243.5 147.8 246.6 148.6"/><path stroke="#caa670" stroke-width="0.7" opacity="0.85" d="M224.0 140.8Q224.8 139.9 228.5 136.6M202.0 135.5Q204.7 133.9 206.9 131.3M223.9 140.8Q225.7 138.8 225.0 137.3"/><path stroke="#caa670" stroke-width="1.1" opacity="0.7" d="M204.5 136.1Q205.3 134.3 203.5 131.2"/><path stroke="#caa670" stroke-width="1.1" opacity="0.85" d="M213.9 138.4Q213.4 136.4 214.3 134.6"/><path stroke="#f2dcc0" stroke-width="0.9" opacity="0.55" d="M189.4 132.4Q193.2 129.5 194.7 128.4M193.6 133.5Q196.7 132.3 197.5 130.6"/><path stroke="#d98a44" stroke-width="1.3" opacity="0.35" d="M134.6 503.4Q136.6 507.1 136.6 510.8M218.0 440.2Q218.5 443.9 220.8 447.6"/><path stroke="#7a4e28" stroke-width="1.3" opacity="0.5" d="M78.2 400.1Q80.1 405.1 84.0 410.1M59.6 409.2Q57.7 412.6 58.3 416.0"/><path stroke="#ffffff" stroke-width="1.3" opacity="0.65" d="M213.2 393.2Q214.2 396.8 216.1 400.3M200.3 344.7Q201.9 349.2 201.0 353.7M196.0 396.4Q195.2 399.0 193.1 401.6M234.2 428.8Q232.3 433.2 232.5 437.6M229.7 364.2Q228.5 368.7 226.5 373.1M233.7 380.2Q236.5 384.5 239.3 388.9"/><path stroke="#3a2c14" stroke-width="1.3" opacity="0.65" d="M236.4 173.8Q234.8 177.1 234.3 180.3M233.0 149.6Q232.5 153.3 230.7 156.9"/><path stroke="#bf6f2e" stroke-width="1.3" opacity="0.35" d="M166.7 509.4Q166.1 513.0 165.3 516.6M177.3 464.7Q174.8 468.3 172.6 471.9M137.6 394.8Q135.3 398.4 133.5 402.0"/><path stroke="#c87a36" stroke-width="1.3" opacity="0.65" d="M140.8 411.9Q141.4 416.8 141.0 421.6M78.7 477.3Q77.0 481.7 76.3 486.1M136.8 487.3Q138.0 490.3 139.3 493.3M136.4 494.5Q135.6 500.0 137.1 505.6"/><path stroke="#2e1e12" stroke-width="0.8" opacity="0.5" d="M66.7 379.6Q69.9 384.7 71.1 389.7M69.1 386.2Q67.5 391.8 66.8 397.4M62.4 386.0Q63.2 390.1 61.5 394.2"/><path stroke="#d2a674" stroke-width="0.8" opacity="0.5" d="M118.8 258.4Q121.1 261.9 124.1 265.5M144.8 140.6Q146.8 145.2 147.1 149.8M224.5 253.1Q222.8 255.9 223.2 258.7M242.1 234.5Q238.7 236.4 238.2 238.3"/><path stroke="#d98a44" stroke-width="1.3" opacity="0.65" d="M143.1 352.3Q144.5 356.1 147.1 359.8M111.7 386.4Q110.9 390.8 109.6 395.2M185.0 508.3Q187.1 511.0 187.5 513.7M113.7 386.3Q117.2 389.8 117.7 393.4M112.5 410.2Q114.2 413.9 116.6 417.6M140.9 339.5Q142.6 343.2 143.6 346.8"/><path stroke="#fbe2c4" stroke-width="0.8" opacity="0.65" d="M217.9 437.2Q216.6 441.2 212.9 445.3M139.9 468.6Q140.3 472.4 142.3 476.2M205.6 335.2Q203.1 340.9 202.6 346.5M248.9 395.5Q249.5 398.8 250.5 402.1"/><path stroke="#d98a44" stroke-width="1" opacity="0.65" d="M187.6 498.7Q187.2 501.4 188.5 504.0M71.3 491.2Q71.2 495.4 70.5 499.5M64.7 514.6Q63.3 518.7 62.3 522.8"/><path stroke="#ffffff" stroke-width="1.3" opacity="0.35" d="M206.4 362.8Q205.3 366.4 204.5 370.1"/><path stroke="#c87a36" stroke-width="1" opacity="0.35" d="M180.2 440.4Q178.8 444.2 179.8 448.0M149.8 339.8Q150.3 343.7 149.7 347.6M57.5 502.8Q54.1 507.7 51.9 512.7M238.3 470.6Q240.0 473.9 241.4 477.2M118.8 358.5Q118.4 364.3 118.9 370.0"/><path stroke="#ffffff" stroke-width="1" opacity="0.35" d="M217.1 418.1Q216.5 421.5 217.8 424.8M158.0 385.7Q158.5 390.1 160.1 394.5M201.8 342.3Q200.7 345.1 201.1 347.9"/><path stroke="#bf6f2e" stroke-width="1.3" opacity="0.65" d="M145.6 433.2Q144.6 436.0 144.1 438.8M229.7 328.8Q227.4 332.8 226.2 336.9M177.6 433.0Q176.5 437.9 173.0 442.8M214.3 502.0Q216.6 505.3 217.1 508.6M88.8 461.4Q89.5 464.4 91.7 467.4M82.5 498.0Q82.1 502.6 82.1 507.1M88.6 488.6Q89.1 491.9 86.8 495.3M238.5 428.2Q234.5 433.1 232.6 438.1M162.6 468.5Q160.1 473.0 158.8 477.6M57.1 506.3Q55.5 512.0 55.0 517.7"/><path stroke="#d98a44" stroke-width="0.8" opacity="0.65" d="M80.2 476.0Q80.4 480.6 80.6 485.1M107.1 476.9Q105.8 481.6 106.6 486.4M241.4 445.6Q242.5 450.5 244.3 455.4M195.4 502.4Q194.2 506.9 191.7 511.3"/><path stroke="#f4c08a" stroke-width="1.3" opacity="0.5" d="M90.0 446.3Q92.6 450.6 94.4 454.9M125.9 485.1Q125.3 488.9 122.4 492.6M133.6 350.7Q129.9 355.3 127.9 360.0M178.8 456.9Q178.8 460.7 178.1 464.6M191.1 432.6Q194.5 436.5 194.9 440.4M128.4 334.2Q127.6 338.5 127.5 342.8"/><path stroke="#f4c08a" stroke-width="1" opacity="0.5" d="M138.1 366.3Q137.0 369.6 136.5 372.8M240.9 482.5Q242.5 485.5 241.9 488.4M127.1 337.4Q126.5 340.3 128.1 343.3M117.4 509.7Q116.7 515.6 117.4 521.5"/><path stroke="#f2e6da" stroke-width="1" opacity="0.35" d="M167.8 388.9Q169.4 393.9 168.9 399.0M214.5 372.2Q215.3 374.9 216.0 377.6"/><path stroke="#d2a674" stroke-width="1" opacity="0.65" d="M158.5 139.8Q159.4 143.0 158.8 146.2M232.9 232.1Q229.2 234.5 225.8 236.9M141.1 295.3Q142.3 298.9 145.2 302.5"/><path stroke="#f8d0a0" stroke-width="1" opacity="0.5" d="M105.1 455.7Q105.1 459.1 103.5 462.6M91.4 478.6Q90.9 480.8 88.8 482.9M121.0 485.5Q119.0 488.0 119.1 490.6M180.2 439.7Q180.3 442.3 181.4 444.9M180.1 463.8Q182.4 468.7 185.7 473.6M191.2 499.6Q189.8 504.1 187.1 508.7"/><path stroke="#bf6f2e" stroke-width="1" opacity="0.65" d="M200.9 465.6Q198.9 469.8 198.4 474.1M84.4 467.7Q87.5 472.5 90.8 477.2M231.4 441.3Q228.0 444.6 227.6 447.9"/><path stroke="#f4c08a" stroke-width="1.3" opacity="0.35" d="M186.2 489.5Q188.5 495.3 187.8 501.1M169.8 499.2Q169.8 504.0 171.5 508.8M186.4 472.5Q187.3 475.4 188.8 478.3M142.2 473.1Q140.0 476.5 139.9 479.8M229.5 314.9Q230.0 318.8 228.9 322.8"/><path stroke="#c87a36" stroke-width="1" opacity="0.5" d="M128.1 358.3Q127.9 361.4 126.3 364.4M129.1 414.4Q131.3 417.2 132.9 420.1M116.6 501.9Q116.4 507.2 118.4 512.4"/><path stroke="#7a4e28" stroke-width="0.8" opacity="0.5" d="M90.8 394.9Q92.0 397.8 93.1 400.7"/><path stroke="#d2a674" stroke-width="0.8" opacity="0.35" d="M110.7 232.5Q111.7 234.8 112.9 237.0M108.3 241.4Q109.4 244.1 112.1 246.8M207.5 251.6Q206.0 255.8 201.8 260.0"/><path stroke="#f4c08a" stroke-width="1" opacity="0.65" d="M238.0 361.6Q237.5 366.0 235.0 370.5"/><path stroke="#c2b84a" stroke-width="1" opacity="0.65" d="M163.8 158.3Q164.6 164.1 165.2 169.9"/><path stroke="#ecd2b0" stroke-width="1.3" opacity="0.35" d="M97.8 258.8Q102.5 261.1 107.0 263.4M156.0 284.0Q157.5 289.4 157.1 294.8M124.7 240.4Q127.2 244.9 128.5 249.3"/><path stroke="#f4c08a" stroke-width="1" opacity="0.35" d="M103.1 379.2Q100.1 382.1 99.9 385.1M107.6 359.3Q109.1 364.1 109.0 369.0"/><path stroke="#f4c08a" stroke-width="1.3" opacity="0.65" d="M131.6 339.6Q134.1 345.1 134.6 350.6M143.5 401.3Q144.5 404.3 146.1 407.3M180.2 515.7Q178.9 519.0 178.8 522.2M103.0 426.6Q101.0 431.3 97.9 436.0M144.9 477.9Q141.1 482.9 139.8 487.8M113.1 368.8Q114.5 372.1 113.5 375.3"/><path stroke="#d2a674" stroke-width="1.3" opacity="0.65" d="M143.3 147.0Q147.1 150.5 148.3 154.0M226.0 196.2Q223.8 200.4 219.7 204.6M238.6 230.0Q237.9 235.1 234.3 240.2M236.7 259.7Q232.2 264.4 229.9 269.0M192.0 297.3Q191.8 300.9 190.3 304.5M124.9 165.2Q125.7 170.9 127.5 176.6M95.2 248.6Q99.0 249.7 101.6 250.9M115.0 309.8Q114.1 312.4 115.1 315.0M106.5 262.0Q110.9 264.4 116.7 266.7"/><path stroke="#fbe2c4" stroke-width="1.3" opacity="0.65" d="M187.4 430.1Q184.5 433.8 184.0 437.4M188.7 501.6Q186.6 504.8 184.5 508.1M239.7 336.7Q238.8 341.8 238.3 347.0"/><path stroke="#f2e6da" stroke-width="1.3" opacity="0.5" d="M207.9 380.9Q204.3 385.3 202.8 389.7M205.0 386.5Q204.8 390.7 204.8 394.9"/><path stroke="#ecd2b0" stroke-width="0.8" opacity="0.65" d="M144.4 286.9Q144.2 289.6 146.9 292.2M108.0 245.4Q111.7 249.4 112.6 253.5"/><path stroke="#f7eee6" stroke-width="1" opacity="0.65" d="M170.8 401.9Q172.4 407.0 176.4 412.0M183.4 338.9Q180.9 341.8 179.6 344.8"/><path stroke="#7a4e28" stroke-width="0.8" opacity="0.65" d="M73.0 426.9Q73.7 430.8 73.5 434.7"/><path stroke="#5a3a20" stroke-width="0.8" opacity="0.5" d="M99.1 419.7Q96.6 424.9 95.3 430.0"/><path stroke="#f8d0a0" stroke-width="1.3" opacity="0.65" d="M188.7 484.7Q186.6 489.4 185.2 494.2M222.1 460.8Q226.4 465.7 227.8 470.6M164.7 505.4Q163.7 508.9 163.3 512.4M127.7 370.2Q128.3 373.3 128.7 376.4M203.0 449.2Q201.8 454.0 202.3 458.8"/><path stroke="#fff2e2" stroke-width="0.8" opacity="0.5" d="M168.3 282.9Q170.3 285.9 170.9 288.8M182.4 264.8Q184.2 268.4 184.7 272.0"/><path stroke="#f4c08a" stroke-width="0.8" opacity="0.35" d="M233.5 460.4Q235.2 463.2 236.1 466.1M120.0 366.0Q122.4 370.0 123.1 374.1M152.6 458.2Q150.2 460.8 150.1 463.5"/><path stroke="#fbe2c4" stroke-width="0.8" opacity="0.5" d="M223.0 460.3Q220.0 465.5 217.1 470.7M125.2 466.7Q125.5 470.9 125.3 475.0M222.5 490.3Q220.4 495.0 221.0 499.6M149.8 458.2Q151.0 461.8 151.7 465.3"/><path stroke="#ecd2b0" stroke-width="1.3" opacity="0.5" d="M232.4 253.3Q230.3 256.0 227.7 258.6M205.8 297.1Q203.1 301.1 202.1 305.2M199.8 293.4Q196.7 296.4 196.4 299.5M221.2 221.6Q220.2 224.1 218.3 226.7"/><path stroke="#d98a44" stroke-width="1" opacity="0.5" d="M141.5 456.0Q144.8 460.5 145.8 465.1M118.2 471.3Q118.0 476.3 115.5 481.3M123.6 379.2Q121.8 382.0 121.9 384.7M149.3 497.9Q148.3 500.8 146.1 503.7"/><path stroke="#bf6f2e" stroke-width="0.8" opacity="0.35" d="M218.0 475.8Q220.2 480.6 221.6 485.3M142.3 488.6Q142.8 493.2 145.4 497.9M212.7 517.6Q213.3 521.3 213.5 524.9M104.1 451.0Q104.1 455.4 104.5 459.9"/><path stroke="#ffffff" stroke-width="0.8" opacity="0.65" d="M222.5 375.1Q221.7 379.3 219.2 383.5M169.3 364.1Q168.7 366.8 170.4 369.6M186.8 422.8Q184.1 428.2 183.0 433.6"/><path stroke="#f2e6da" stroke-width="0.8" opacity="0.35" d="M167.0 349.5Q166.4 352.3 164.4 355.0M161.1 378.9Q159.3 381.4 159.8 384.0M212.7 412.7Q209.8 415.9 209.1 419.1M191.8 396.5Q191.3 401.3 189.3 406.1M189.5 394.1Q191.5 398.6 190.7 403.1"/><path stroke="#d98a44" stroke-width="0.8" opacity="0.35" d="M101.9 389.4Q101.4 394.7 101.6 399.9M208.6 493.9Q207.7 496.8 207.2 499.7M132.2 437.6Q132.9 441.8 130.7 446.0M149.0 466.6Q148.9 468.9 146.0 471.2M117.2 508.8Q116.8 513.2 117.7 517.6M186.7 498.7Q183.2 502.2 181.9 505.8M93.7 432.1Q93.7 435.1 94.1 438.1M180.7 516.6Q180.1 522.3 178.1 528.0M202.3 496.3Q203.5 502.1 204.1 507.8"/><path stroke="#fff2e2" stroke-width="1.3" opacity="0.65" d="M248.2 255.7Q245.2 259.4 240.2 263.0M98.2 228.7Q102.3 230.5 107.7 232.4M209.7 290.6Q208.2 293.4 205.4 296.3M219.1 247.9Q217.8 252.4 214.4 256.9"/><path stroke="#c87a36" stroke-width="1.3" opacity="0.5" d="M171.2 478.5Q174.2 481.5 174.5 484.4M112.5 468.6Q114.1 470.9 114.7 473.2"/><path stroke="#bf6f2e" stroke-width="0.8" opacity="0.5" d="M127.0 408.3Q129.4 411.3 129.9 414.2M93.7 456.5Q90.5 461.5 89.7 466.5M110.1 400.5Q110.2 406.0 110.1 411.6M206.0 457.5Q207.9 463.0 207.2 468.5"/><path stroke="#f7eee6" stroke-width="0.8" opacity="0.35" d="M171.8 381.1Q171.0 384.5 172.5 387.8M225.9 336.2Q227.3 340.2 229.0 344.2M212.1 395.9Q208.9 399.4 207.7 402.9M188.9 336.7Q191.0 341.3 191.3 345.8"/><path stroke="#d8cc6a" stroke-width="1.3" opacity="0.65" d="M179.4 145.2Q179.5 148.4 181.5 151.7"/><path stroke="#f8d0a0" stroke-width="0.8" opacity="0.65" d="M236.8 361.5Q237.6 364.8 240.6 368.1"/><path stroke="#f8d0a0" stroke-width="0.8" opacity="0.5" d="M149.3 368.5Q152.0 373.0 154.8 377.4"/><path stroke="#bf6f2e" stroke-width="1.3" opacity="0.5" d="M185.2 480.0Q186.4 482.5 185.0 485.0M212.6 469.8Q211.6 473.2 208.4 476.5"/><path stroke="#ecd2b0" stroke-width="0.8" opacity="0.5" d="M159.8 219.0Q161.8 223.4 162.3 227.8M170.6 283.6Q169.8 287.9 167.8 292.2M134.2 163.0Q133.9 165.9 135.7 168.7M126.4 162.9Q126.6 165.7 128.6 168.5M127.2 299.2Q129.6 304.2 130.0 309.3M119.5 275.7Q122.9 277.6 124.7 279.5"/><path stroke="#c87a36" stroke-width="0.8" opacity="0.65" d="M101.6 463.3Q102.7 468.7 104.4 474.1"/><path stroke="#ecd2b0" stroke-width="1" opacity="0.5" d="M129.5 209.7Q130.9 212.1 132.7 214.5M174.7 283.4Q174.2 289.1 172.2 294.8"/><path stroke="#c8985e" stroke-width="1.3" opacity="0.65" d="M223.6 294.3Q222.6 298.9 220.2 303.5M219.1 242.3Q217.0 244.9 214.3 247.5"/><path stroke="#f6e4cc" stroke-width="1.3" opacity="0.35" d="M105.7 249.0Q109.8 253.1 111.7 257.2"/><path stroke="#ffffff" stroke-width="0.8" opacity="0.5" d="M192.6 404.2Q193.5 409.6 197.3 415.0M192.9 368.7Q192.6 372.4 191.3 376.0M228.2 342.8Q231.1 346.1 232.4 349.3M228.6 415.5Q232.1 420.5 234.6 425.5M154.8 404.6Q155.4 409.1 156.3 413.6"/><path stroke="#fbe2c4" stroke-width="0.8" opacity="0.35" d="M131.3 512.0Q131.4 516.2 130.1 520.5M144.7 401.8Q143.7 405.4 144.8 409.0M191.2 480.6Q190.2 485.4 191.6 490.1M121.5 442.4Q121.4 444.9 119.9 447.4"/><path stroke="#5a3a20" stroke-width="1.3" opacity="0.65" d="M95.5 384.9Q92.9 388.1 93.0 391.4M77.4 413.1Q76.5 419.0 75.6 424.9"/><path stroke="#8c8a2c" stroke-width="1" opacity="0.35" d="M200.4 156.6Q201.1 162.0 199.3 167.4M206.6 189.8Q205.7 195.7 206.7 201.6"/><path stroke="#f6e4cc" stroke-width="1.3" opacity="0.5" d="M174.8 205.5Q174.5 209.3 176.4 213.2M105.0 229.4Q107.2 232.7 111.0 236.0"/><path stroke="#fff2e2" stroke-width="1.3" opacity="0.5" d="M122.6 175.4Q126.6 178.5 128.9 181.5M176.0 287.1Q176.7 290.5 178.5 294.0M163.7 235.2Q163.4 238.3 164.2 241.3M216.9 269.4Q215.3 274.2 214.4 279.0M122.0 156.1Q124.8 158.7 125.8 161.3"/><path stroke="#f7eee6" stroke-width="0.8" opacity="0.5" d="M206.9 423.9Q204.6 427.4 202.6 430.9M157.3 409.6Q156.3 412.9 154.9 416.3M226.6 338.2Q224.3 341.4 224.7 344.5M185.4 395.9Q186.1 400.1 184.7 404.2"/><path stroke="#c8985e" stroke-width="1" opacity="0.5" d="M104.7 166.1Q107.4 168.5 107.5 170.8M159.4 142.8Q159.5 147.3 157.7 151.8M108.9 260.3Q109.9 263.0 113.3 265.7M103.6 244.4Q105.2 246.7 109.3 248.9"/><path stroke="#2e1e12" stroke-width="1.3" opacity="0.35" d="M91.8 419.5Q91.0 422.3 88.7 425.0M97.3 401.9Q97.4 407.3 98.9 412.7M92.2 425.8Q92.0 429.2 91.3 432.6"/><path stroke="#f6e4cc" stroke-width="0.8" opacity="0.35" d="M227.1 210.2Q224.3 214.6 223.6 218.9M119.1 167.3Q123.0 170.4 128.9 173.5M230.8 307.7Q232.9 312.6 236.3 317.5"/><path stroke="#ffffff" stroke-width="1" opacity="0.5" d="M188.5 387.4Q187.9 392.5 187.0 397.7M226.0 382.0Q228.7 385.6 228.4 389.2M224.5 342.1Q222.9 344.3 221.8 346.6M233.1 364.2Q233.2 367.0 234.1 369.8"/><path stroke="#c87a36" stroke-width="1.3" opacity="0.35" d="M226.3 320.4Q222.5 325.2 220.0 330.0"/><path stroke="#c2b84a" stroke-width="1.3" opacity="0.5" d="M191.1 134.6Q190.6 138.1 189.4 141.7"/><path stroke="#fbe2c4" stroke-width="1" opacity="0.5" d="M247.9 396.2Q247.0 400.8 244.2 405.5M235.6 439.3Q235.2 443.5 234.1 447.6M216.2 439.1Q218.1 443.8 218.2 448.5M184.5 435.3Q184.7 440.1 184.7 444.9M78.7 477.3Q80.2 481.4 78.8 485.4"/><path stroke="#d98a44" stroke-width="1" opacity="0.35" d="M94.4 440.4Q91.8 444.4 92.1 448.4M136.7 347.5Q137.8 350.5 137.5 353.6M132.8 401.5Q133.0 406.6 130.8 411.8M238.3 371.8Q239.5 375.8 238.8 379.8M187.9 452.7Q188.3 455.1 191.0 457.4M179.4 333.6Q181.6 337.5 181.4 341.4M145.7 505.6Q146.2 509.9 145.6 514.3M144.0 466.1Q145.6 471.3 146.2 476.5"/><path stroke="#fff2e2" stroke-width="1" opacity="0.65" d="M143.6 160.4Q146.9 165.8 148.1 171.2M199.6 236.8Q197.7 239.4 197.9 242.0M208.2 255.5Q205.9 259.0 204.4 262.5M231.7 187.8Q227.0 190.5 223.7 193.2"/><path stroke="#d8cc6a" stroke-width="0.8" opacity="0.35" d="M177.1 162.7Q178.1 166.0 177.6 169.3M177.4 152.1Q176.6 155.2 175.3 158.2"/><path stroke="#c87a36" stroke-width="0.8" opacity="0.5" d="M141.3 378.2Q141.0 383.9 140.8 389.6M133.5 351.7Q133.1 357.6 132.6 363.6M99.6 462.4Q99.8 465.4 102.3 468.4M98.3 449.7Q96.4 452.8 96.6 455.8"/><path stroke="#f7eee6" stroke-width="1" opacity="0.5" d="M158.6 424.2Q160.2 427.4 161.5 430.6M194.5 346.9Q194.5 351.1 194.1 355.3M182.3 427.4Q181.4 433.2 182.7 439.0"/><path stroke="#fbe2c4" stroke-width="1" opacity="0.35" d="M114.7 427.2Q114.0 431.5 111.5 435.8M115.6 496.5Q114.7 498.9 112.6 501.3M108.1 407.5Q107.9 412.2 109.1 416.9"/><path stroke="#f6e4cc" stroke-width="1" opacity="0.35" d="M246.6 239.5Q243.6 241.3 243.1 243.2M224.4 192.2Q222.8 197.1 220.3 202.0"/><path stroke="#fff2e2" stroke-width="0.8" opacity="0.35" d="M123.0 250.9Q124.7 254.9 124.6 259.0M227.9 274.2Q225.1 278.1 224.3 282.1M93.7 237.3Q95.1 239.0 98.6 240.6M115.6 181.2Q118.3 183.2 121.1 185.2"/><path stroke="#8c8a2c" stroke-width="1.3" opacity="0.5" d="M200.6 143.0Q200.0 146.8 196.5 150.6"/><path stroke="#c8985e" stroke-width="1.3" opacity="0.5" d="M239.5 191.5Q234.9 194.3 232.5 197.0M113.1 154.4Q118.2 157.9 122.4 161.5M166.0 213.7Q165.7 217.7 167.4 221.7M132.1 286.1Q131.9 289.1 132.9 292.2M133.0 162.3Q135.6 166.0 138.5 169.6"/><path stroke="#bf6f2e" stroke-width="1" opacity="0.5" d="M94.9 474.4Q92.4 477.3 92.2 480.3M122.4 360.8Q121.8 363.3 119.1 365.7M193.9 464.7Q194.9 468.0 193.3 471.2"/><path stroke="#ecd2b0" stroke-width="0.8" opacity="0.35" d="M190.4 261.3Q190.1 265.0 191.9 268.7M99.3 149.6Q102.9 152.0 105.9 154.3M112.4 263.2Q115.1 265.9 118.7 268.5M100.6 223.3Q102.6 228.3 105.7 233.4"/><path stroke="#f7eee6" stroke-width="0.8" opacity="0.65" d="M185.0 339.1Q185.6 343.4 186.2 347.7M158.6 366.7Q160.5 371.2 161.4 375.7M203.6 400.8Q202.1 405.3 202.4 409.8M161.8 381.8Q161.4 386.8 158.9 391.7"/><path stroke="#f2e6da" stroke-width="0.8" opacity="0.65" d="M219.9 385.3Q219.0 390.2 219.6 395.2"/><path stroke="#d8cc6a" stroke-width="0.8" opacity="0.5" d="M196.7 135.1Q195.7 140.5 192.7 145.8"/><path stroke="#fbe2c4" stroke-width="1" opacity="0.65" d="M165.4 494.0Q166.4 497.8 166.1 501.6M146.4 392.0Q148.7 396.6 149.3 401.3M122.9 486.2Q120.5 489.2 120.5 492.3"/><path stroke="#5a3a20" stroke-width="1" opacity="0.65" d="M93.9 384.9Q93.5 390.7 92.9 396.5"/><path stroke="#f2e6da" stroke-width="1" opacity="0.5" d="M160.6 362.8Q158.0 367.7 155.0 372.6M205.9 427.2Q206.2 432.3 204.7 437.4"/><path stroke="#ecd2b0" stroke-width="1.3" opacity="0.65" d="M248.9 213.4Q244.9 216.3 238.9 219.2M100.2 262.6Q104.9 264.7 109.4 266.8"/><path stroke="#f2e6da" stroke-width="1" opacity="0.65" d="M167.9 351.8Q168.7 355.4 171.7 359.1"/><path stroke="#fff2e2" stroke-width="0.8" opacity="0.65" d="M211.4 197.1Q209.2 202.2 206.4 207.3M212.6 215.6Q209.5 220.3 205.3 225.0M119.9 308.8Q119.2 312.9 116.1 317.0"/><path stroke="#bf6f2e" stroke-width="0.8" opacity="0.65" d="M140.7 435.1Q142.1 438.5 143.7 441.8M218.1 479.3Q217.4 482.3 217.3 485.3"/><path stroke="#f2e6da" stroke-width="1.3" opacity="0.35" d="M184.5 428.6Q186.9 432.1 187.3 435.5M165.5 367.5Q166.3 370.1 167.3 372.8"/><path stroke="#f7eee6" stroke-width="1.3" opacity="0.65" d="M163.1 421.1Q164.3 425.8 162.6 430.5M183.9 355.4Q182.1 358.6 182.5 361.7M208.1 365.9Q205.9 370.5 204.3 375.2"/><path stroke="#8c8a2c" stroke-width="1.3" opacity="0.35" d="M186.1 146.9Q186.7 152.1 186.7 157.4"/><path stroke="#d2a674" stroke-width="1.3" opacity="0.5" d="M121.4 282.6Q124.3 285.4 126.4 288.2M243.3 232.7Q239.7 236.9 235.5 241.1"/><path stroke="#ffffff" stroke-width="1.3" opacity="0.5" d="M215.1 372.8Q213.6 377.9 210.2 382.9M198.5 348.7Q199.6 352.3 202.7 355.9M194.6 388.2Q192.8 390.8 191.3 393.3"/><path stroke="#c87a36" stroke-width="0.8" opacity="0.35" d="M142.8 492.3Q139.5 497.4 137.6 502.6M147.9 382.0Q149.2 385.6 150.7 389.2M130.6 428.1Q129.0 432.0 126.3 436.0M136.3 484.8Q137.3 489.2 137.2 493.6M85.6 461.0Q83.3 466.2 83.7 471.4M191.4 503.7Q189.0 508.9 189.2 514.1"/><path stroke="#5a3a20" stroke-width="1.3" opacity="0.35" d="M62.3 426.6Q63.9 429.5 66.1 432.4M60.9 374.5Q60.2 377.9 58.6 381.3"/><path stroke="#2e2210" stroke-width="1" opacity="0.5" d="M204.5 155.7Q200.9 159.9 197.3 164.1M228.2 182.6Q227.8 186.2 225.0 189.9"/><path stroke="#f6e4cc" stroke-width="0.8" opacity="0.5" d="M157.7 283.5Q158.7 287.7 159.0 292.0M247.3 221.4Q245.2 225.1 242.2 228.9"/><path stroke="#d98a44" stroke-width="1.3" opacity="0.5" d="M233.8 439.0Q231.9 441.9 232.3 444.7M90.3 506.3Q90.8 509.7 90.8 513.1"/><path stroke="#2e1e12" stroke-width="1" opacity="0.65" d="M72.7 404.4Q71.5 410.1 69.5 415.8"/><path stroke="#7a4e28" stroke-width="1" opacity="0.65" d="M91.1 406.3Q92.2 409.8 91.7 413.4"/><path stroke="#f7eee6" stroke-width="1.3" opacity="0.5" d="M223.7 340.9Q226.0 345.5 229.9 350.1M217.6 401.0Q217.9 404.7 217.5 408.5M155.5 358.0Q155.3 363.6 153.0 369.2"/><path stroke="#c2b84a" stroke-width="0.8" opacity="0.35" d="M173.8 132.6Q175.7 137.2 175.7 141.8"/><path stroke="#c8985e" stroke-width="1.3" opacity="0.35" d="M126.6 143.9Q131.2 148.2 133.8 152.6M158.5 289.9Q157.8 292.5 159.1 295.1"/><path stroke="#d2a674" stroke-width="1.3" opacity="0.35" d="M113.4 182.2Q116.8 185.0 120.1 187.7"/><path stroke="#f4c08a" stroke-width="0.8" opacity="0.65" d="M112.3 366.2Q114.7 370.5 114.2 374.7"/><path stroke="#f8d0a0" stroke-width="1.3" opacity="0.35" d="M194.9 510.0Q196.7 512.1 197.8 514.2M115.7 496.0Q115.7 501.9 116.6 507.9M178.9 433.6Q178.6 436.1 179.8 438.6M159.8 493.3Q158.8 498.5 159.6 503.7M130.7 509.3Q131.2 512.2 129.5 515.1M198.0 492.9Q194.6 497.8 192.9 502.7M90.2 463.5Q89.7 468.8 90.2 474.1"/><path stroke="#f7eee6" stroke-width="1" opacity="0.35" d="M181.6 397.7Q181.8 400.3 183.2 403.0M224.2 419.9Q227.2 423.4 228.6 426.8M178.4 369.9Q179.6 373.6 178.9 377.3M158.2 423.7Q160.1 426.1 160.2 428.5"/><path stroke="#f6e4cc" stroke-width="1.3" opacity="0.65" d="M154.0 203.8Q154.1 208.9 156.4 214.0M128.1 249.6Q129.4 252.1 129.2 254.7M244.6 236.7Q240.2 239.5 235.3 242.2"/><path stroke="#6a5c24" stroke-width="0.8" opacity="0.35" d="M225.5 174.9Q225.6 180.3 223.4 185.7"/><path stroke="#7a4e28" stroke-width="1.3" opacity="0.35" d="M94.8 424.3Q95.1 426.8 92.8 429.4"/><path stroke="#f7eee6" stroke-width="1.3" opacity="0.35" d="M173.3 396.0Q172.1 401.3 172.0 406.6M168.3 349.5Q165.8 354.2 163.5 358.8"/><path stroke="#c87a36" stroke-width="1" opacity="0.65" d="M229.9 480.5Q228.4 482.9 229.1 485.4"/><path stroke="#fff2e2" stroke-width="1" opacity="0.35" d="M135.6 298.9Q137.7 301.1 139.5 303.4M240.0 264.5Q238.0 267.9 237.7 271.2M128.4 242.4Q130.7 244.7 133.8 247.1"/><path stroke="#fbe2c4" stroke-width="1.3" opacity="0.5" d="M169.3 458.6Q170.3 462.6 171.9 466.7M191.6 467.1Q189.1 471.0 186.7 474.9"/><path stroke="#6a5c24" stroke-width="1.3" opacity="0.35" d="M244.5 161.1Q241.3 164.9 236.7 168.8"/><path stroke="#f2e6da" stroke-width="0.8" opacity="0.5" d="M201.3 364.3Q199.4 368.8 196.5 373.2M206.9 408.4Q206.4 411.2 206.8 413.9"/><path stroke="#8c8a2c" stroke-width="1" opacity="0.5" d="M189.8 145.9Q188.1 151.6 186.8 157.2"/><path stroke="#3a2c14" stroke-width="0.8" opacity="0.5" d="M223.9 180.4Q221.9 183.3 217.1 186.3"/><path stroke="#f8d0a0" stroke-width="0.8" opacity="0.35" d="M140.5 368.2Q141.6 371.8 144.2 375.4M191.4 434.2Q194.7 438.8 196.5 443.3"/><path stroke="#5a3a20" stroke-width="0.8" opacity="0.65" d="M56.7 404.6Q55.1 408.5 54.1 412.5"/><path stroke="#f4c08a" stroke-width="0.8" opacity="0.5" d="M134.5 375.3Q133.2 377.7 131.6 380.1M91.4 487.1Q91.4 491.2 93.9 495.2"/><path stroke="#ecd2b0" stroke-width="1" opacity="0.65" d="M122.5 261.0Q125.0 263.6 126.6 266.1"/><path stroke="#2e2210" stroke-width="1" opacity="0.65" d="M235.9 147.8Q233.4 150.7 233.6 153.5"/><path stroke="#8c8a2c" stroke-width="0.8" opacity="0.5" d="M168.9 183.3Q167.8 187.8 167.7 192.4"/><path stroke="#6a5c24" stroke-width="1.3" opacity="0.5" d="M228.4 161.3Q224.7 164.3 220.4 167.3"/><path stroke="#d2a674" stroke-width="1" opacity="0.35" d="M232.1 219.3Q230.5 222.3 229.4 225.4"/><path stroke="#6a5c24" stroke-width="0.8" opacity="0.65" d="M223.6 163.6Q220.8 168.7 217.6 173.9"/><path stroke="#5a3a20" stroke-width="0.8" opacity="0.35" d="M58.4 413.9Q56.3 416.5 55.4 419.0M97.0 381.7Q96.7 385.6 95.6 389.6"/><path stroke="#c8985e" stroke-width="1" opacity="0.65" d="M205.1 254.3Q204.0 256.9 203.7 259.5M156.8 288.1Q158.3 292.0 159.7 295.9"/><path stroke="#fbe2c4" stroke-width="1.3" opacity="0.35" d="M120.9 403.7Q122.4 407.2 121.2 410.7M188.9 507.2Q188.6 512.0 190.3 516.8M241.5 440.0Q240.2 444.4 236.0 448.8M213.9 513.7Q213.8 519.3 213.0 525.0"/><path stroke="#c8985e" stroke-width="0.8" opacity="0.65" d="M146.8 140.4Q150.7 145.5 152.6 150.6M148.1 138.6Q147.8 142.1 149.9 145.6"/><path stroke="#6a5c24" stroke-width="1.3" opacity="0.65" d="M235.5 175.2Q235.1 178.8 233.5 182.4"/><path stroke="#c2b84a" stroke-width="1" opacity="0.35" d="M185.1 163.0Q183.8 167.5 184.9 172.1"/><path stroke="#fff2e2" stroke-width="1.3" opacity="0.35" d="M117.7 276.0Q122.5 278.3 125.3 280.6M250.8 247.8Q250.7 250.1 248.4 252.4"/><path stroke="#f6e4cc" stroke-width="1" opacity="0.5" d="M220.0 265.4Q218.9 270.9 218.7 276.5M230.3 213.6Q228.1 216.1 226.9 218.5"/><path stroke="#d2a674" stroke-width="0.8" opacity="0.65" d="M102.0 251.1Q104.3 255.4 109.0 259.7"/><path stroke="#bf6f2e" stroke-width="1" opacity="0.35" d="M106.6 441.8Q107.1 444.8 105.5 447.9M217.3 494.9Q218.5 498.9 217.6 502.8"/><path stroke="#f6e4cc" stroke-width="1" opacity="0.65" d="M117.5 245.6Q119.7 251.0 120.8 256.4"/><path stroke="#d8cc6a" stroke-width="1" opacity="0.35" d="M173.7 187.9Q173.7 190.5 173.5 193.0"/><path stroke="#d8cc6a" stroke-width="1.3" opacity="0.35" d="M165.2 150.2Q166.0 153.9 166.3 157.6M169.1 150.5Q171.6 154.5 171.7 158.4"/><path stroke="#f2e6da" stroke-width="1.3" opacity="0.65" d="M200.5 361.2Q200.2 364.7 200.0 368.2"/><path stroke="#2e1e12" stroke-width="1.3" opacity="0.5" d="M96.6 398.0Q97.6 401.7 100.6 405.4"/><path stroke="#3a2c14" stroke-width="1" opacity="0.65" d="M217.4 146.3Q215.7 151.0 211.4 155.6"/><path stroke="#d2a674" stroke-width="1" opacity="0.5" d="M121.6 183.5Q124.8 186.6 126.4 189.7"/><path stroke="#f8d0a0" stroke-width="1" opacity="0.35" d="M235.9 478.4Q234.3 482.1 231.5 485.8"/><path stroke="#2e1e12" stroke-width="1.3" opacity="0.65" d="M68.0 424.6Q68.3 429.2 66.2 433.9"/><path stroke="#3a2c14" stroke-width="1" opacity="0.35" d="M228.7 162.7Q227.4 167.1 223.8 171.5"/><path stroke="#c8985e" stroke-width="1" opacity="0.35" d="M125.5 148.5Q128.9 150.8 130.9 153.1"/><path stroke="#f6e4cc" stroke-width="0.8" opacity="0.65" d="M232.4 261.5Q229.0 264.4 226.8 267.3"/></g>
<!-- head shading -->
<g filter="url(#b4)">
<ellipse cx="130" cy="196" rx="10" ry="13" fill="#d89c6c" opacity=".75"/><ellipse cx="143" cy="164" rx="11" ry="6" fill="#e2ae84" opacity=".7"/>
<ellipse cx="150" cy="246" rx="8" ry="18" fill="#b98858" opacity=".55"/>
<ellipse cx="206" cy="250" rx="8" ry="20" fill="#b98a50" opacity=".5"/>
<ellipse cx="114" cy="262" rx="14" ry="30" fill="#f1dcc2" opacity=".7"/>
<ellipse cx="232" cy="200" rx="8" ry="14" fill="#c89c60" opacity=".5"/>
</g>
<g filter="url(#b2)">
<path d="M150 192 C 146 198 142 206 140 214 C 136 210 134 202 136 194 Z" fill="#b8875a" opacity=".5"/>
<path d="M196 186 C 204 192 212 196 220 196 C 216 204 208 208 200 206 Z" fill="#a88648" opacity=".5"/>
<ellipse cx="176" cy="186" rx="9" ry="8" fill="#f4e6d4" opacity=".8"/>
<ellipse cx="122" cy="232" rx="12" ry="18" fill="#dfa878" opacity=".5"/>
</g>
<!-- left ear -->
<g filter="url(#fur2)">
<path d="M87 143 C 100 140 118 138 131 135 L 146 131 C 141 142 136 151 131 161 C 128 171 124 181 118 189 C 114 193 110 191 108 187 C 102 172 94 158 87 143 Z" fill="#f1e2e4"/>
<path d="M117 164 C 120 162 123 163 123 166 C 121 175 117 186 110 195 C 106 192 105 186 108 178 C 111 172 114 167 117 164 Z" fill="#20150f"/>
<path d="M124 160 C 128 156 131 158 130 163 C 128 172 124 182 119 190 C 118 180 120 170 124 160 Z" fill="#f0dfe0"/>
</g>
<ellipse cx="108" cy="152" rx="11" ry="6" fill="#f8f0ee" transform="rotate(-12 108 152)" filter="url(#b2)"/>
<path d="M131 141 C 136 136 142 133 148 133 C 144 142 140 152 134 162 Z" fill="#7c5c2e" opacity=".75" filter="url(#b1)"/>
<!-- tufts -->
<g stroke="#f4f2ee" fill="none" stroke-linecap="round" filter="url(#b05)">
<path d="M138 130 C 134 124 130 118 126 114" stroke-width="1.6"/><path d="M141 129 C 140 122 142 118 146 115" stroke-width="1.4"/><path d="M135 131 C 130 128 126 124 122 123" stroke-width="1.2"/>
<path d="M144 129 C 146 124 149 122 152 121" stroke-width="1.1"/><path d="M96 150 C 92 148 88 146 84 146" stroke-width="1.2"/><path d="M98 146 C 94 140 92 136 92 130" stroke-width="1"/>
<path d="M140.0 131.8Q132.0 127.3 127.3 123.8" stroke-width="1" opacity="0.6"/><path d="M141.6 128.1Q138.3 124.2 134.4 118.6" stroke-width="0.8" opacity="0.6"/><path d="M142.4 131.0Q139.5 125.9 136.8 119.1" stroke-width="1" opacity="0.6"/><path d="M144.0 128.4Q143.4 122.0 140.2 117.1" stroke-width="0.6" opacity="0.8"/><path d="M140.1 128.3Q137.4 122.6 137.0 115.5" stroke-width="1" opacity="0.6"/><path d="M142.9 128.1Q142.3 123.8 138.9 119.6" stroke-width="1" opacity="0.8"/><path d="M140.6 129.4Q140.4 124.1 138.2 120.4" stroke-width="1" opacity="0.8"/><path d="M144.3 131.8Q141.2 124.9 140.5 119.3" stroke-width="1" opacity="0.8"/><path d="M142.6 128.3Q141.9 121.4 139.5 115.6" stroke-width="0.6" opacity="0.6"/><path d="M140.7 128.9Q135.2 126.9 131.3 124.1" stroke-width="0.8" opacity="0.6"/><path d="M143.9 128.5Q140.3 121.3 140.5 112.3" stroke-width="0.6" opacity="0.8"/><path d="M139.0 131.2Q133.7 126.0 127.8 119.3" stroke-width="0.6" opacity="0.8"/><path d="M143.1 129.6Q140.2 126.6 135.5 125.3" stroke-width="1" opacity="0.6"/><path d="M144.9 130.1Q137.6 124.6 130.4 120.5" stroke-width="1" opacity="0.6"/><path d="M139.7 131.7Q133.0 126.1 129.3 121.4" stroke-width="0.8" opacity="0.8"/><path d="M138.0 131.3Q129.5 127.2 124.6 121.3" stroke-width="1" opacity="0.6"/><path d="M90.1 151.7L85.1 149.3" stroke-width="0.6" opacity="0.8"/><path d="M97.7 150.1L92.3 148.1" stroke-width="0.8" opacity="0.6"/><path d="M96.6 147.6L85.1 148.2" stroke-width="0.8" opacity="0.8"/><path d="M93.5 143.5L87.7 144.1" stroke-width="0.6" opacity="0.6"/><path d="M96.5 148.5L89.0 149.6" stroke-width="0.8" opacity="0.6"/><path d="M99.7 149.7L91.3 143.1" stroke-width="0.6" opacity="0.6"/><path d="M91.9 146.5L86.5 143.1" stroke-width="0.8" opacity="0.8"/><path d="M98.9 149.7L93.7 139.0" stroke-width="0.6" opacity="0.8"/><path d="M89.0 146.8L82.0 138.7" stroke-width="0.8" opacity="0.8"/><path d="M95.5 151.6L91.2 146.0" stroke-width="0.6" opacity="0.6"/><path d="M197 131 C 196 126 196 124 198 121" stroke-width="1"/><path d="M203 132 C 204 127 205 125 207 123" stroke-width="1"/>
</g>
<!-- right ear -->
<g filter="url(#fur2)">
<path d="M190 132 C 206 133 230 142 248 153 C 248 162 242 175 233 186 C 226 182 217 171 210 160 C 203 152 195 140 190 132 Z" fill="#46301a"/>
</g>
<path d="M194 134 C 212 138 228 150 240 166 C 226 160 208 150 194 134 Z" fill="#8a8224" filter="url(#b2)" opacity=".9"/>
<path d="M212 160 C 220 168 226 176 232 184 C 234 178 232 172 228 168 Z" fill="#5a2418" opacity=".8" filter="url(#b1)"/>
<ellipse cx="238.7" cy="150.5" rx="4.4" ry="3.8" fill="#f0c4aa" filter="url(#b1)"/><ellipse cx="196.5" cy="132.5" rx="3.4" ry="2.6" fill="#e8b09c" filter="url(#b1)"/>
<!-- green forehead -->
<g filter="url(#b4)">
<ellipse cx="189" cy="152" rx="21" ry="24" fill="#aea532" opacity=".95"/>
<ellipse cx="190" cy="180" rx="12" ry="14" fill="#a5a63e" opacity=".7"/>
<ellipse cx="198" cy="200" rx="10" ry="14" fill="#9ea444" opacity=".75"/>
<ellipse cx="236" cy="240" rx="13" ry="34" fill="#d6b852" opacity=".7"/>
<ellipse cx="214" cy="150" rx="10" ry="14" fill="#7d7a28" opacity=".7"/>
</g>
<!-- whites on head -->
<g filter="url(#b2)">
<ellipse cx="156" cy="147" rx="13" ry="9" fill="#fbf2e6" transform="rotate(-20 156 147)"/>
<ellipse cx="179" cy="148" rx="3.4" ry="3" fill="#f0d8c0" opacity=".85"/><ellipse cx="192" cy="139" rx="3" ry="2.6" fill="#f0ccb4" opacity=".85"/>
<ellipse cx="188.5" cy="178.5" rx="8" ry="7" fill="#fbf0ea"/>
<path d="M142 190 C 150 182 164 182 172 190 C 170 204 164 216 152 220 C 142 216 138 204 142 190 Z" fill="#fdfbf8"/>

</g>
<!-- eyes -->
<g filter="url(#b1)">
<path d="M132 183 C 135 174 142 168 150 169 C 154 171 153 177 150 183 C 146 189 139 192 134 190 C 131 189 131 186 132 183 Z" fill="#1a120e"/>
<path d="M196 168 C 200 164 208 165 213 171 C 216 175 216 181 212 183 C 206 184 199 180 196 176 C 194 173 194 170 196 168 Z" fill="#2a2214"/>
<ellipse cx="146" cy="177" rx="2.2" ry="1.6" fill="#7c6c60" opacity=".8"/>
<ellipse cx="206" cy="174" rx="2" ry="1.4" fill="#6c6048" opacity=".8"/>
<path d="M150 186 l3 -2 l2 3 l-3 3 z M147 192 l2 -1 l1 2 z" fill="#f6f2ee" opacity=".9"/>
</g>
<!-- upper lip area -->
<ellipse cx="176" cy="227" rx="28" ry="10" fill="#c4a07c" opacity=".7" filter="url(#b4)"/>
<!-- nose -->
<g filter="url(#b05)">
<path d="M159 205 C 159 198 167 194.6 176 194.6 C 185.5 194.6 193 198 193 205 C 193 213.5 186 221.4 176 221.4 C 166 221.4 159 213.5 159 205 Z" fill="#171717"/>
<ellipse cx="176" cy="199" rx="10" ry="3" fill="#5e5e5e" opacity=".75"/>
<ellipse cx="184" cy="199.5" rx="3" ry="2.2" fill="#d8d8d8" opacity=".8"/>
<ellipse cx="167.5" cy="209.5" rx="4.6" ry="4.2" fill="#030303"/><ellipse cx="184.5" cy="208.5" rx="4" ry="3.8" fill="#030303"/>
<ellipse cx="182" cy="213" rx="1.4" ry="1" fill="#bbb" opacity=".7"/>
<path d="M176 214 L176 224" stroke="#1a1412" stroke-width="1.6"/>
</g>
<!-- mouth -->
<path d="M144 240 C 150 232 164 229 176 231 C 188 229 200 230 206 237 C 209 254 201 270 188 277 C 179 281 167 280 158 273 C 148 265 143 253 144 240 Z" fill="#8a6448" opacity=".55" filter="url(#b2)"/>
<g filter="url(#b05)">
<path d="M146 240 C 151 235 160 232 166 234 C 172 237 182 237 188 234 C 194 231 200 233 204 237 C 206 252 199 267 187 274 C 179 278 168 277 160 271 C 151 264 146 253 146 240 Z" fill="#1a0d0a"/>
<path d="M161 240 C 166 235 188 235 194 239 C 196 252 191 264 177 265.5 C 165 264 159 252 161 240 Z" fill="url(#tongueg)"/>
<path d="M177.5 238 C 177 246 177 254 177.5 262" stroke="#8a2c4c" stroke-width="1.4" opacity=".65" fill="none"/>
<path d="M165 263.5 C 170 268 185 268 190 262.5" stroke="#f2e6d0" stroke-width="3.6" fill="none" stroke-dasharray="3.2 0.8"/>
<path d="M161 263 L165.4 263.5 L163.6 252.5 Z" fill="#f2e4c8"/><path d="M189.6 262.6 L194 261 L191.6 250.5 Z" fill="#f2e4c8"/>
<path d="M152 240 l3 .5 l-1 3z M198 238 l-3 .8 l1.2 3z" fill="#e6d8c0" opacity=".8"/>
</g>
<!-- chin -->
<ellipse cx="177" cy="284" rx="22" ry="8" fill="#f2e0d2" opacity=".85" filter="url(#b2)"/>
<!--DOG-END-->

    </g>
  </svg>

  <div id="vsep"></div>
  <div id="panel">
    <div class="abs" style="left:17px;top:5px;font-size:11px;font-weight:bold;color:#d8d8d8;line-height:14px;letter-spacing:0">ADJUST</div>
<div class="abs" style="left:17px;top:24.3px;width:170px;height:1.5px;background:#494949"></div>
<div class="row" style="top:39.1px"><svg class="chev" width="7" height="10" viewBox="0 0 7 10"><path d="M1.9 2.1 L4.9 5 L1.9 7.9" fill="none" stroke="#b0b0b0" stroke-width="1.2" stroke-linecap="round" stroke-linejoin="round"/></svg><svg class="ic" width="14" height="14" viewBox="0 0 14 14"><g stroke="#c8c8c8" stroke-width="1.1" stroke-linecap="round"><circle cx="7" cy="7" r="2.6" fill="#c8c8c8" stroke="none"/><path d="M7 1.2v1.4M7 11.4v1.4M1.2 7h1.4M11.4 7h1.4M2.9 2.9l1 1M10.1 10.1l1 1M2.9 11.1l1-1M10.1 3.9l1-1"/></g></svg><div class="t">Light</div></div>
<div class="hl" style="top:58.5px"></div>
<div class="row" style="top:62.7px"><svg class="chev" width="7" height="10" viewBox="0 0 7 10"><path d="M1.9 2.1 L4.9 5 L1.9 7.9" fill="none" stroke="#b0b0b0" stroke-width="1.2" stroke-linecap="round" stroke-linejoin="round"/></svg><svg class="ic" width="14" height="14" viewBox="0 0 14 14"><path d="M12.14 4.77 A5.6 5.6 0 0 1 12.14 9.23" fill="none" stroke="#f09a30" stroke-width="1.3"/><path d="M12.21 9.05 A5.6 5.6 0 0 1 9.05 12.21" fill="none" stroke="#e6c636" stroke-width="1.3"/><path d="M9.23 12.14 A5.6 5.6 0 0 1 4.77 12.14" fill="none" stroke="#58c050" stroke-width="1.3"/><path d="M4.95 12.21 A5.6 5.6 0 0 1 1.79 9.05" fill="none" stroke="#38a0d8" stroke-width="1.3"/><path d="M1.86 9.23 A5.6 5.6 0 0 1 1.86 4.77" fill="none" stroke="#3c6cf0" stroke-width="1.3"/><path d="M1.79 4.95 A5.6 5.6 0 0 1 4.95 1.79" fill="none" stroke="#8a50e0" stroke-width="1.3"/><path d="M4.77 1.86 A5.6 5.6 0 0 1 9.23 1.86" fill="none" stroke="#e83c6a" stroke-width="1.3"/><path d="M9.05 1.79 A5.6 5.6 0 0 1 12.21 4.95" fill="none" stroke="#f06a38" stroke-width="1.3"/></svg><div class="t">Color</div></div>
<div class="hl" style="top:82.5px"></div>
<div class="row" style="top:86.7px"><svg class="chev" width="7" height="10" viewBox="0 0 7 10"><path d="M1.9 2.1 L4.9 5 L1.9 7.9" fill="none" stroke="#b0b0b0" stroke-width="1.2" stroke-linecap="round" stroke-linejoin="round"/></svg><svg class="ic" width="14" height="14" viewBox="0 0 14 14"><circle cx="7" cy="7" r="5.6" fill="none" stroke="#c8c8c8" stroke-width="1.2"/><path d="M7 1.4 A5.6 5.6 0 0 1 7 12.6 Z" fill="#c8c8c8"/></svg><div class="t">Black &amp; White</div></div>
<div class="hl" style="top:106.5px"></div>
<div class="row" style="top:111.0px"><svg class="chev" width="7" height="10" viewBox="0 0 7 10"><path d="M1.9 2.1 L4.9 5 L1.9 7.9" fill="none" stroke="#b0b0b0" stroke-width="1.2" stroke-linecap="round" stroke-linejoin="round"/></svg><svg class="ic" width="14" height="14" viewBox="0 0 14 14"><g stroke="#8a8a8a" stroke-width="1" fill="none" stroke-linecap="round"><path d="M1 7 C 3 3.6 5 2.8 7 2.8 S 11 3.6 13 7 C 11 10.4 9 11.2 7 11.2 S 3 10.4 1 7 Z"/><circle cx="7" cy="7" r="2.2"/><path d="M2 2 L12 12" stroke-width="1.2"/></g></svg><div class="t">Red-Eye</div></div>
<div class="hl" style="top:132.1px"></div>
<div class="row" style="top:136.0px"><svg class="chev" width="7" height="10" viewBox="0 0 7 10"><path d="M1.9 2.1 L4.9 5 L1.9 7.9" fill="none" stroke="#b0b0b0" stroke-width="1.2" stroke-linecap="round" stroke-linejoin="round"/></svg><svg class="ic" width="14" height="14" viewBox="0 0 14 14"><rect x="1.2" y="1.2" width="11.6" height="11.6" rx="1.2" fill="none" stroke="#aaa" stroke-width="1.1"/><path d="M1.7 1.7 L12.3 1.7 L1.7 12.3 Z" fill="#a2a2a2"/><path d="M3.4 4.6h2.6M4.7 3.3v2.6" stroke="#3a3a3a" stroke-width=".8"/><path d="M8.8 10.2h2.4" stroke="#b0b0b0" stroke-width=".8"/></svg><div class="t">White Balance</div></div>
<div class="hl" style="top:158.0px"></div>
<div class="row" style="top:161.5px"><svg class="chev" width="7" height="10" viewBox="0 0 7 10"><path d="M1.9 2.1 L4.9 5 L1.9 7.9" fill="none" stroke="#b0b0b0" stroke-width="1.2" stroke-linecap="round" stroke-linejoin="round"/></svg><svg class="ic" width="14" height="14" viewBox="0 0 14 14"><rect x="1.2" y="1.2" width="11.6" height="11.6" rx="1.2" fill="none" stroke="#c8c8c8" stroke-width="1.2"/><path d="M5 1.5v11M9 1.5v11M1.5 5h11M1.5 9h11" stroke="#c8c8c8" stroke-width=".5" opacity=".55"/><path d="M2 12 C 6 11.5 7.5 8 8 6 S 10 2.5 12 2" stroke="#c8c8c8" stroke-width="1.1" fill="none"/></svg><div class="t">Curves</div></div>
<div class="hl" style="top:183.9px"></div>
<div class="row" style="top:187.7px"><svg class="chev" width="7" height="10" viewBox="0 0 7 10"><path d="M1.9 2.1 L4.9 5 L1.9 7.9" fill="none" stroke="#b0b0b0" stroke-width="1.2" stroke-linecap="round" stroke-linejoin="round"/></svg><svg class="ic" width="14" height="14" viewBox="0 0 14 14"><rect x="1.2" y="1.2" width="11.6" height="11.6" rx="1.2" fill="none" stroke="#c8c8c8" stroke-width="1.2"/><path d="M2.6 10.6 L2.6 8 L4 5.6 L5 7.4 L6.4 3.4 L7.6 6.6 L8.8 4.6 L10 7.6 L11.4 6.4 L11.4 10.6 Z" fill="#c8c8c8"/><path d="M2.6 11.8h8.8" stroke="#c8c8c8" stroke-width=".8"/></svg><div class="t">Levels</div></div>
<div class="hl" style="top:210.1px"></div>
<div class="row" style="top:214.2px"><svg class="chev" width="7" height="10" viewBox="0 0 7 10"><path d="M1.9 2.1 L4.9 5 L1.9 7.9" fill="none" stroke="#b0b0b0" stroke-width="1.2" stroke-linecap="round" stroke-linejoin="round"/></svg><svg class="ic" width="14" height="14" viewBox="0 0 14 14"><path d="M1.6 12.4 L12.4 12.4 L12.4 1.8 Z" fill="none" stroke="#c8c8c8" stroke-width="1.1" stroke-linejoin="round"/><path d="M6.4 12.2 L12.2 6.6" stroke="#c8c8c8" stroke-width=".9"/></svg><div class="t">Definition</div></div>
<div class="hl" style="top:236.0px"></div>
<div class="row" style="top:239.8px"><svg class="chev" width="7" height="10" viewBox="0 0 7 10"><path d="M1.9 2.1 L4.9 5 L1.9 7.9" fill="none" stroke="#b0b0b0" stroke-width="1.2" stroke-linecap="round" stroke-linejoin="round"/></svg><svg class="ic" width="14" height="14" viewBox="0 0 14 14"><circle cx="4.6" cy="2.8" r="1.5" fill="#f03cc8"/><circle cx="9.4" cy="2.8" r="1.5" fill="#f04238"/><circle cx="2.4" cy="7" r="1.5" fill="#3c6cf0"/><circle cx="7" cy="7" r="1.5" fill="#e8e8e8"/><circle cx="11.6" cy="7" r="1.5" fill="#f0e034"/><circle cx="4.6" cy="11.2" r="1.5" fill="#34d8e8"/><circle cx="9.4" cy="11.2" r="1.5" fill="#48d848"/></svg><div class="t">Selective Color</div></div>
<div class="hl" style="top:261.9px"></div>
<div class="row" style="top:266.0px"><svg class="chev" width="7" height="10" viewBox="0 0 7 10"><path d="M1.9 2.1 L4.9 5 L1.9 7.9" fill="none" stroke="#b0b0b0" stroke-width="1.2" stroke-linecap="round" stroke-linejoin="round"/></svg><svg class="ic" width="14" height="14" viewBox="0 0 14 14"><rect x="1.2" y="1.2" width="11.6" height="11.6" rx="1.2" fill="none" stroke="#c8c8c8" stroke-width="1.2"/><rect x="3" y="3" width="8" height="8" fill="#8e8e8e"/><rect x="3" y="3" width="4" height="8" fill="#6e6e6e"/></svg><div class="t">Noise Reduction</div></div>
<div class="hl" style="top:287.8px"></div>
<div class="row" style="top:291.6px"><svg class="chev" width="7" height="10" viewBox="0 0 7 10"><path d="M1.9 2.1 L4.9 5 L1.9 7.9" fill="none" stroke="#b0b0b0" stroke-width="1.2" stroke-linecap="round" stroke-linejoin="round"/></svg><svg class="ic" width="14" height="14" viewBox="0 0 14 14"><path d="M1.4 12.6 L12.6 12.6 L12.6 1.6 Z" fill="#c8c8c8"/></svg><div class="t">Sharpen</div></div>
<div class="hl" style="top:313.7px"></div>
<div class="row" style="top:317.2px"><svg class="chev" width="7" height="10" viewBox="0 0 7 10"><path d="M1.9 2.1 L4.9 5 L1.9 7.9" fill="none" stroke="#b0b0b0" stroke-width="1.2" stroke-linecap="round" stroke-linejoin="round"/></svg><svg class="ic" width="14" height="14" viewBox="0 0 14 14"><circle cx="7" cy="7" r="5.8" fill="none" stroke="#c8c8c8" stroke-width="1.1"/><circle cx="7" cy="7" r="3.9" fill="none" stroke="#c8c8c8" stroke-width="1"/></svg><div class="t">Vignette</div></div>
<div class="hl" style="top:339.0px"></div>
<div class="abs" style="left:17px;top:534px;width:171px;height:24px;border-radius:5px;background:#404040;color:#6c6c6c;font-size:11.8px;letter-spacing:-0.12px;text-align:center;line-height:24px">Reset Adjustments</div>

  </div>
  
  <div class="abs" style="left:112.1px;top:577px;width:32px;height:27.4px;background:#4a4a4a;border-radius:5px 0 0 5px"></div>
  <svg class="abs" style="left:121.6px;top:583.2px" width="14" height="15" viewBox="0 0 14 15"><path d="M1.6 1.6 L11.8 7.5 L1.6 13.4 Z" fill="#fff" stroke="#fff" stroke-width="1" stroke-linejoin="round"/></svg>
  <div class="abs" style="left:145.4px;top:577px;width:478.5px;height:27.4px;background:#4a4a4a;border-radius:0 5px 5px 0"></div>
  <svg class="abs" style="left:147px;top:579.7px" width="480" height="24" viewBox="0 0 480 24">
    <path d="M7.5 5.3 L3.9 11.1 L7.5 17.1" fill="none" stroke="#fff" stroke-width="2.2" stroke-linejoin="round" stroke-linecap="butt"/>
    <path d="M467.3 5.5 L471.6 11.1 L467.3 17" fill="none" stroke="#fff" stroke-width="2.2" stroke-linejoin="round" stroke-linecap="butt"/>
  </svg>
  <svg class="abs" style="left:160px;top:579.6px" width="449" height="23" viewBox="0 0 449 23">
    <defs>
      <pattern id="fr" x="0" y="0" width="17.27" height="23" patternUnits="userSpaceOnUse">
        <use href="#photoG" transform="scale(0.04428 0.04423)"/>
        <rect x="17.05" width=".22" height="23" fill="#222" opacity=".3"/>
      </pattern>
    </defs>
    <rect width="449" height="23" fill="url(#fr)"/>
  </svg>
  <div class="abs" style="left:241.2px;top:576.2px;width:3.6px;height:28.6px;background:#fff;border-radius:1.8px;box-shadow:0 0 1.5px rgba(0,0,0,.7)"></div>
  <div class="abs" style="left:428px;top:569.3px;width:6.4px;height:6.4px;border-radius:50%;background:#fff"></div>
  <div class="abs" style="left:672.8px;top:579px;width:32.6px;height:24px;background:#4a4a4a;border-radius:5px"></div>
  <svg class="abs" style="left:678.6px;top:583px" width="22" height="16" viewBox="0 0 22 16">
    <path d="M1 5.4 L4 5.4 L8.2 1.6 Q9 1 9 2 L9 14 Q9 15 8.2 14.4 L4 10.6 L1 10.6 Q0.4 10.6 0.4 10 L0.4 6 Q0.4 5.4 1 5.4 Z" fill="#f7c81c"/>
    <g fill="none" stroke="#f7c81c" stroke-width="1.2" stroke-linecap="round"><path d="M11.4 5.6 Q12.6 8 11.4 10.4"/><path d="M13.8 3.9 Q16 8 13.8 12.1"/><path d="M16.3 2.2 Q19.4 8 16.3 13.8"/></g>
  </svg>

</div>
</body>
</html>
